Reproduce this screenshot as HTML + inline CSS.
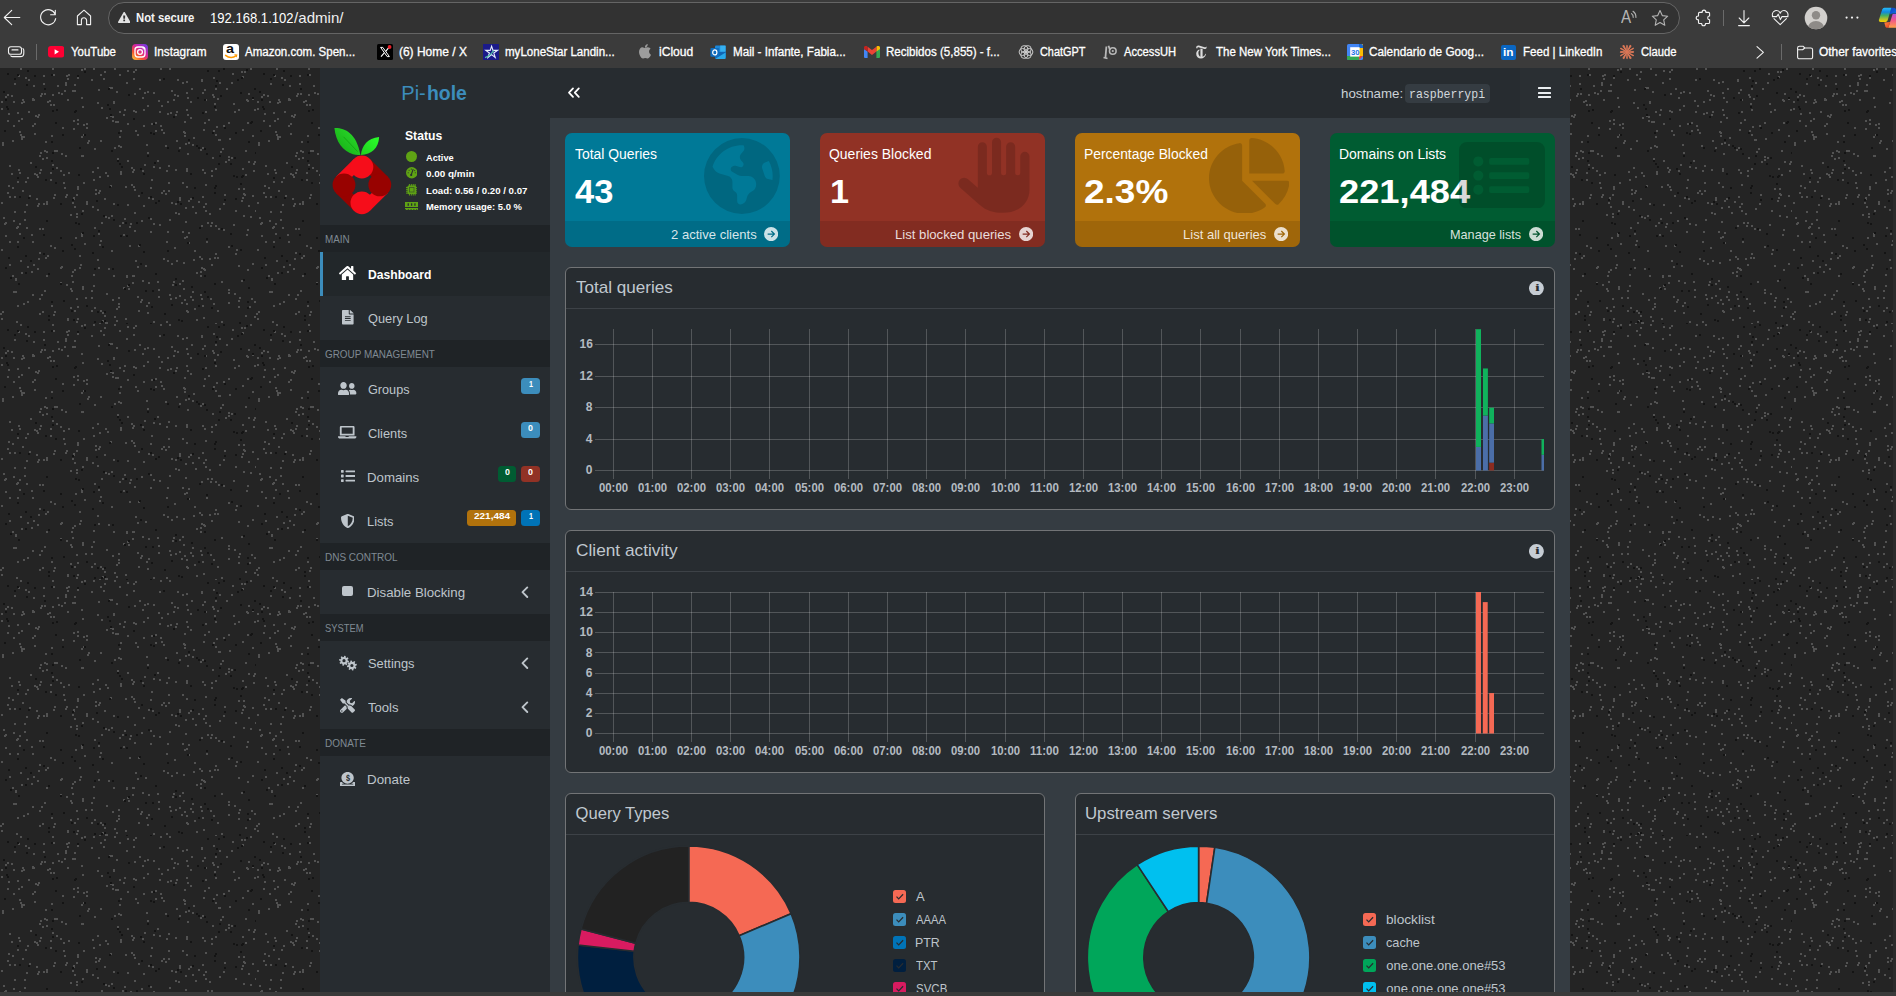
<!DOCTYPE html>
<html lang="en"><head><meta charset="utf-8"><title>Pi-hole - raspberrypi</title>
<style>
html,body{margin:0;padding:0;}
body{width:1896px;height:996px;overflow:hidden;position:relative;background:#222;font-family:"Liberation Sans", sans-serif;}
#root{position:absolute;left:0;top:0;width:1896px;height:996px;overflow:hidden;}
#root div,#root span,#root svg{position:absolute;}
#root span{white-space:pre;transform-origin:0 0;display:block;}

</style></head><body><div id="root">

<svg style="left:0;top:68px" width="1896" height="928"><defs><pattern id="spk" width="256" height="256" patternUnits="userSpaceOnUse"><rect width="256" height="256" fill="#242424"/><path d="M165 77h2v2h-2zM202 24h2v2h-2zM37 48h2v2h-2zM187 29h2v2h-2zM109 19h2v2h-2zM44 222h2v2h-2zM214 35h2v2h-2zM123 46h2v2h-2zM217 30h2v2h-2zM63 114h2v2h-2zM31 203h2v2h-2zM25 113h2v2h-2zM23 68h2v2h-2zM148 214h2v2h-2zM73 60h2v2h-2zM157 92h2v2h-2zM52 96h2v2h-2zM190 49h2v2h-2zM32 30h2v2h-2zM105 254h2v2h-2zM218 160h2v2h-2zM238 232h2v2h-2zM185 153h2v2h-2zM127 92h2v2h-2zM124 41h2v2h-2zM153 253h2v2h-2zM175 229h2v2h-2zM147 37h2v2h-2zM60 214h2v2h-2zM84 175h2v2h-2zM77 250h2v2h-2zM215 20h2v2h-2zM39 160h2v2h-2zM174 179h2v2h-2zM254 233h2v2h-2zM35 47h2v2h-2zM138 242h2v2h-2zM33 31h2v2h-2zM158 228h2v2h-2zM145 197h2v2h-2zM177 11h2v2h-2zM236 181h2v2h-2zM86 59h2v2h-2zM252 30h2v2h-2zM111 147h2v2h-2zM66 126h2v2h-2zM203 200h2v2h-2zM254 41h2v2h-2zM85 229h2v2h-2zM205 142h2v2h-2zM70 220h2v2h-2zM142 212h2v2h-2zM183 194h2v2h-2zM118 77h2v2h-2zM42 90h2v2h-2zM77 118h2v2h-2zM119 6h2v2h-2zM248 93h2v2h-2zM134 144h2v2h-2zM2 74h2v2h-2zM214 189h2v2h-2zM163 64h2v2h-2zM27 233h2v2h-2zM200 203h2v2h-2zM204 201h2v2h-2zM53 246h2v2h-2zM205 31h2v2h-2zM97 34h2v2h-2zM106 225h2v2h-2zM83 56h2v2h-2zM174 26h2v2h-2zM52 0h2v2h-2zM77 51h2v2h-2zM186 13h2v2h-2zM36 106h2v2h-2zM192 76h2v2h-2zM129 177h2v2h-2zM186 242h2v2h-2zM62 59h2v2h-2zM249 238h2v2h-2zM245 247h2v2h-2zM159 43h2v2h-2zM73 52h2v2h-2zM175 135h2v2h-2zM245 82h2v2h-2zM11 105h2v2h-2zM185 75h2v2h-2zM13 152h2v2h-2zM46 133h2v2h-2zM187 85h2v2h-2zM182 114h2v2h-2zM168 114h2v2h-2zM99 122h2v2h-2zM205 116h2v2h-2zM102 252h2v2h-2zM182 14h2v2h-2zM14 143h2v2h-2zM241 132h2v2h-2zM99 176h2v2h-2zM228 178h2v2h-2zM186 41h2v2h-2zM112 52h2v2h-2zM116 240h2v2h-2zM100 172h2v2h-2zM104 247h2v2h-2zM0 245h2v2h-2zM176 43h2v2h-2zM61 198h2v2h-2zM102 244h2v2h-2zM91 222h2v2h-2zM170 44h2v2h-2zM202 237h2v2h-2zM205 43h2v2h-2zM81 87h2v2h-2zM65 14h2v2h-2zM77 238h2v2h-2zM74 242h2v2h-2zM179 79h2v2h-2zM67 10h2v2h-2zM7 52h2v2h-2zM71 222h2v2h-2zM99 108h2v2h-2zM14 128h2v2h-2zM108 149h2v2h-2zM123 166h2v2h-2zM132 214h2v2h-2zM67 31h2v2h-2zM181 234h2v2h-2zM215 66h2v2h-2zM77 9h2v2h-2zM225 93h2v2h-2zM2 76h2v2h-2zM88 72h2v2h-2zM242 61h2v2h-2zM31 166h2v2h-2zM247 54h2v2h-2zM29 127h2v2h-2zM97 141h2v2h-2zM21 50h2v2h-2zM231 14h2v2h-2zM32 226h2v2h-2zM166 102h2v2h-2zM141 231h2v2h-2zM244 126h2v2h-2zM132 103h2v2h-2zM229 70h2v2h-2zM213 62h2v2h-2zM200 226h2v2h-2zM161 37h2v2h-2zM123 219h2v2h-2zM37 108h2v2h-2zM155 62h2v2h-2zM79 187h2v2h-2zM73 129h2v2h-2zM70 239h2v2h-2zM112 48h2v2h-2zM203 249h2v2h-2zM83 114h2v2h-2zM82 220h2v2h-2zM206 173h2v2h-2zM215 100h2v2h-2zM182 163h2v2h-2zM47 187h2v2h-2zM9 173h2v2h-2zM234 225h2v2h-2zM9 196h2v2h-2zM169 151h2v2h-2zM32 57h2v2h-2zM117 53h2v2h-2zM43 135h2v2h-2zM139 20h2v2h-2zM92 138h2v2h-2zM66 216h2v2h-2zM132 207h2v2h-2zM76 253h2v2h-2zM167 45h2v2h-2zM142 29h2v2h-2zM93 217h2v2h-2zM37 137h2v2h-2zM8 45h2v2h-2zM133 42h2v2h-2zM113 34h2v2h-2zM135 62h2v2h-2zM232 5h2v2h-2zM173 213h2v2h-2zM137 66h2v2h-2zM22 122h2v2h-2zM56 82h2v2h-2zM134 25h2v2h-2zM92 103h2v2h-2zM159 156h2v2h-2zM105 148h2v2h-2zM228 91h2v2h-2zM138 177h2v2h-2zM9 128h2v2h-2zM18 7h2v2h-2zM9 97h2v2h-2zM243 125h2v2h-2zM228 54h2v2h-2zM221 253h2v2h-2zM201 157h2v2h-2zM110 117h2v2h-2zM175 101h2v2h-2zM71 207h2v2h-2zM177 27h2v2h-2zM66 7h2v2h-2zM36 130h2v2h-2zM220 83h2v2h-2zM28 43h2v2h-2zM195 144h2v2h-2zM124 150h2v2h-2zM23 235h2v2h-2zM94 80h2v2h-2zM137 228h2v2h-2zM1 134h2v2h-2zM186 168h2v2h-2zM165 125h2v2h-2zM17 158h2v2h-2zM111 182h2v2h-2zM93 0h2v2h-2zM171 195h2v2h-2zM42 243h2v2h-2zM142 102h2v2h-2zM127 2h2v2h-2zM46 135h2v2h-2zM45 73h2v2h-2zM204 21h2v2h-2zM201 11h2v2h-2zM153 155h2v2h-2zM119 43h2v2h-2zM79 199h2v2h-2zM166 253h2v2h-2zM76 145h2v2h-2zM74 22h2v2h-2zM219 71h2v2h-2zM8 117h2v2h-2zM43 15h2v2h-2zM21 68h2v2h-2zM184 53h2v2h-2zM192 231h2v2h-2zM25 9h2v2h-2zM125 250h2v2h-2zM135 1h2v2h-2zM233 35h2v2h-2zM47 33h2v2h-2zM242 129h2v2h-2zM38 135h2v2h-2zM120 105h2v2h-2zM118 235h2v2h-2zM252 195h2v2h-2zM39 245h2v2h-2zM147 23h2v2h-2zM101 39h2v2h-2zM75 169h2v2h-2zM130 155h2v2h-2zM68 6h2v2h-2zM246 31h2v2h-2zM248 137h2v2h-2zM50 111h2v2h-2zM250 148h2v2h-2zM146 237h2v2h-2zM238 238h2v2h-2zM60 102h2v2h-2zM159 43h2v2h-2zM242 8h2v2h-2zM148 234h2v2h-2zM39 230h2v2h-2zM137 198h2v2h-2zM107 107h2v2h-2zM38 46h2v2h-2zM72 134h2v2h-2zM184 67h2v2h-2zM143 57h2v2h-2zM186 118h2v2h-2zM254 248h2v2h-2zM201 12h2v2h-2zM81 1h2v2h-2zM251 230h2v2h-2zM207 154h2v2h-2zM72 213h2v2h-2zM176 192h2v2h-2zM161 61h2v2h-2zM169 0h2v2h-2zM166 173h2v2h-2zM203 61h2v2h-2zM100 6h2v2h-2zM148 129h2v2h-2zM190 33h2v2h-2zM201 199h2v2h-2zM39 184h2v2h-2zM219 140h2v2h-2zM24 143h2v2h-2zM52 26h2v2h-2zM146 76h2v2h-2zM127 136h2v2h-2zM223 161h2v2h-2zM97 191h2v2h-2zM219 14h2v2h-2zM204 104h2v2h-2zM41 25h2v2h-2zM210 230h2v2h-2zM70 146h2v2h-2zM248 25h2v2h-2zM65 87h2v2h-2zM241 212h2v2h-2zM175 144h2v2h-2zM152 130h2v2h-2zM133 207h2v2h-2zM122 154h2v2h-2zM247 201h2v2h-2zM61 85h2v2h-2zM82 38h2v2h-2zM106 254h2v2h-2zM112 231h2v2h-2zM170 230h2v2h-2zM218 71h2v2h-2zM98 124h2v2h-2zM46 89h2v2h-2zM175 46h2v2h-2zM163 122h2v2h-2zM188 132h2v2h-2zM103 10h2v2h-2zM211 196h2v2h-2zM211 107h2v2h-2zM192 138h2v2h-2zM173 31h2v2h-2zM255 142h2v2h-2zM184 64h2v2h-2zM110 47h2v2h-2zM138 127h2v2h-2zM196 204h2v2h-2zM228 221h2v2h-2zM159 11h2v2h-2zM65 16h2v2h-2zM217 242h2v2h-2zM250 0h2v2h-2zM37 200h2v2h-2zM239 229h2v2h-2zM127 55h2v2h-2zM114 79h2v2h-2zM77 55h2v2h-2zM234 43h2v2h-2zM20 0h2v2h-2zM64 119h2v2h-2zM19 155h2v2h-2zM65 128h2v2h-2zM223 57h2v2h-2zM50 36h2v2h-2zM153 98h2v2h-2zM198 133h2v2h-2zM114 0h2v2h-2zM5 154h2v2h-2zM235 142h2v2h-2zM161 124h2v2h-2zM243 120h2v2h-2zM126 14h2v2h-2zM210 157h2v2h-2zM28 11h2v2h-2zM99 255h2v2h-2zM215 41h2v2h-2zM131 116h2v2h-2zM217 189h2v2h-2zM116 252h2v2h-2zM17 173h2v2h-2zM215 185h2v2h-2zM202 101h2v2h-2zM3 149h2v2h-2zM34 105h2v2h-2zM253 102h2v2h-2zM159 99h2v2h-2zM118 238h2v2h-2zM113 135h2v2h-2zM151 55h2v2h-2zM253 95h2v2h-2zM114 248h2v2h-2zM213 28h2v2h-2zM74 201h2v2h-2zM27 109h2v2h-2zM12 72h2v2h-2zM212 26h2v2h-2zM30 94h2v2h-2zM201 230h2v2h-2zM160 57h2v2h-2zM40 84h2v2h-2zM168 97h2v2h-2zM94 239h2v2h-2zM16 159h2v2h-2zM193 191h2v2h-2zM169 226h2v2h-2zM86 55h2v2h-2zM1 40h2v2h-2zM143 41h2v2h-2zM179 215h2v2h-2zM63 106h2v2h-2zM194 182h2v2h-2zM158 221h2v2h-2zM44 25h2v2h-2zM242 100h2v2h-2zM190 228h2v2h-2zM98 165h2v2h-2zM186 242h2v2h-2zM15 210h2v2h-2zM126 207h2v2h-2zM20 192h2v2h-2zM17 237h2v2h-2zM32 31h2v2h-2zM131 99h2v2h-2zM32 173h2v2h-2zM185 139h2v2h-2zM171 22h2v2h-2zM134 162h2v2h-2zM141 152h2v2h-2zM1 33h2v2h-2zM12 119h2v2h-2zM54 243h2v2h-2zM238 197h2v2h-2zM128 220h2v2h-2zM252 67h2v2h-2zM254 93h2v2h-2zM4 155h2v2h-2zM77 120h2v2h-2zM167 163h2v2h-2zM235 185h2v2h-2zM40 101h2v2h-2zM200 81h2v2h-2zM126 208h2v2h-2zM33 17h2v2h-2zM246 166h2v2h-2zM82 218h2v2h-2zM53 36h2v2h-2zM135 43h2v2h-2zM106 49h2v2h-2zM215 255h2v2h-2zM228 88h2v2h-2zM119 68h2v2h-2zM213 235h2v2h-2zM120 62h2v2h-2zM150 150h2v2h-2zM143 137h2v2h-2zM190 130h2v2h-2zM133 101h2v2h-2zM224 126h2v2h-2zM95 125h2v2h-2zM120 78h2v2h-2zM144 96h2v2h-2zM167 33h2v2h-2zM202 128h2v2h-2zM125 118h2v2h-2zM51 237h2v2h-2zM18 52h2v2h-2zM2 243h2v2h-2zM118 229h2v2h-2zM191 20h2v2h-2zM150 119h2v2h-2zM61 25h2v2h-2zM97 99h2v2h-2zM38 190h2v2h-2zM91 229h2v2h-2zM133 3h2v2h-2zM54 179h2v2h-2zM111 19h2v2h-2zM188 174h2v2h-2zM72 22h2v2h-2zM104 130h2v2h-2zM19 104h2v2h-2zM5 167h2v2h-2zM209 190h2v2h-2zM94 159h2v2h-2zM39 104h2v2h-2zM16 253h2v2h-2zM247 32h2v2h-2zM208 51h2v2h-2zM202 79h2v2h-2zM46 83h2v2h-2zM203 138h2v2h-2zM209 145h2v2h-2zM157 213h2v2h-2zM26 159h2v2h-2zM182 212h2v2h-2zM213 9h2v2h-2zM186 100h2v2h-2zM200 207h2v2h-2zM104 3h2v2h-2zM222 80h2v2h-2zM216 58h2v2h-2zM46 207h2v2h-2zM186 235h2v2h-2zM83 66h2v2h-2zM7 26h2v2h-2zM72 203h2v2h-2zM45 189h2v2h-2zM87 74h2v2h-2zM178 145h2v2h-2zM82 87h2v2h-2zM34 55h2v2h-2zM196 251h2v2h-2zM101 154h2v2h-2zM64 22h2v2h-2zM247 161h2v2h-2zM27 198h2v2h-2zM44 82h2v2h-2zM113 207h2v2h-2zM100 242h2v2h-2zM93 111h2v2h-2zM21 204h2v2h-2zM80 196h2v2h-2zM183 63h2v2h-2zM76 126h2v2h-2zM98 21h2v2h-2zM19 165h2v2h-2zM60 199h2v2h-2zM233 156h2v2h-2zM215 157h2v2h-2zM127 217h2v2h-2zM199 188h2v2h-2zM228 224h2v2h-2zM91 11h2v2h-2zM1 250h2v2h-2zM238 120h2v2h-2zM228 234h2v2h-2zM91 242h2v2h-2zM204 54h2v2h-2zM34 65h2v2h-2zM183 220h2v2h-2zM187 46h2v2h-2zM226 20h2v2h-2zM20 66h2v2h-2zM42 160h2v2h-2zM40 27h2v2h-2zM193 69h2v2h-2zM13 33h2v2h-2zM56 99h2v2h-2zM67 251h2v2h-2zM147 84h2v2h-2zM113 33h2v2h-2zM179 129h2v2h-2zM81 165h2v2h-2zM140 233h2v2h-2zM73 130h2v2h-2zM245 106h2v2h-2zM134 121h2v2h-2zM163 190h2v2h-2zM18 101h2v2h-2zM93 206h2v2h-2zM82 142h2v2h-2zM167 192h2v2h-2zM86 135h2v2h-2zM58 24h2v2h-2zM184 231h2v2h-2zM53 129h2v2h-2zM201 190h2v2h-2zM135 192h2v2h-2zM188 74h2v2h-2zM184 169h2v2h-2zM41 226h2v2h-2zM117 90h2v2h-2zM24 151h2v2h-2zM129 158h2v2h-2zM160 0h2v2h-2zM17 113h2v2h-2zM76 148h2v2h-2zM221 213h2v2h-2zM186 24h2v2h-2zM67 250h2v2h-2zM116 23h2v2h-2zM11 27h2v2h-2zM1 181h2v2h-2zM155 54h2v2h-2zM182 114h2v2h-2zM211 154h2v2h-2zM68 104h2v2h-2zM187 243h2v2h-2zM81 68h2v2h-2zM7 124h2v2h-2zM76 230h2v2h-2zM49 32h2v2h-2zM74 138h2v2h-2zM205 135h2v2h-2zM5 28h2v2h-2zM179 227h2v2h-2zM252 127h2v2h-2zM84 0h2v2h-2zM22 31h2v2h-2zM12 207h2v2h-2zM95 121h2v2h-2zM81 29h2v2h-2zM53 6h2v2h-2zM100 72h2v2h-2zM211 102h2v2h-2zM212 89h2v2h-2zM158 32h2v2h-2zM153 24h2v2h-2zM244 3h2v2h-2zM192 223h2v2h-2zM238 41h2v2h-2zM231 89h2v2h-2zM115 53h2v2h-2zM133 118h2v2h-2zM19 63h2v2h-2zM171 134h2v2h-2zM26 136h2v2h-2zM223 135h2v2h-2zM151 111h2v2h-2zM43 7h2v2h-2zM86 133h2v2h-2zM120 103h2v2h-2zM81 167h2v2h-2zM98 199h2v2h-2zM168 122h2v2h-2zM194 240h2v2h-2zM241 3h2v2h-2zM13 223h2v2h-2zM119 157h2v2h-2zM108 200h2v2h-2zM39 87h2v2h-2zM74 16h2v2h-2zM13 57h2v2h-2zM54 82h2v2h-2zM176 72h2v2h-2zM14 15h2v2h-2zM21 70h2v2h-2zM21 34h2v2h-2zM23 33h2v2h-2zM186 102h2v2h-2zM33 196h2v2h-2zM54 126h2v2h-2zM105 104h2v2h-2zM57 17h2v2h-2zM17 44h2v2h-2zM147 244h2v2h-2zM51 67h2v2h-2zM50 104h2v2h-2zM150 163h2v2h-2zM172 216h2v2h-2zM133 10h2v2h-2zM179 131h2v2h-2zM144 24h2v2h-2zM188 164h2v2h-2zM243 147h2v2h-2zM15 211h2v2h-2zM15 223h2v2h-2zM50 177h2v2h-2z" fill="#525252"/><path d="M240 24h2v2h-2zM110 46h2v2h-2zM147 87h2v2h-2zM223 0h2v2h-2zM103 147h2v2h-2zM27 2h2v2h-2zM178 251h2v2h-2zM48 251h2v2h-2zM94 253h2v2h-2zM177 133h2v2h-2zM81 145h2v2h-2zM109 118h2v2h-2zM255 84h2v2h-2zM56 41h2v2h-2zM251 53h2v2h-2zM167 182h2v2h-2zM48 205h2v2h-2zM202 44h2v2h-2zM216 12h2v2h-2zM190 105h2v2h-2zM155 134h2v2h-2zM219 87h2v2h-2zM194 119h2v2h-2zM235 64h2v2h-2zM17 178h2v2h-2zM167 79h2v2h-2zM230 165h2v2h-2zM86 237h2v2h-2zM224 131h2v2h-2zM118 64h2v2h-2zM171 236h2v2h-2zM121 98h2v2h-2zM136 154h2v2h-2zM79 79h2v2h-2zM126 167h2v2h-2zM178 82h2v2h-2zM120 167h2v2h-2zM96 132h2v2h-2zM52 84h2v2h-2zM52 100h2v2h-2zM196 77h2v2h-2zM75 154h2v2h-2zM152 222h2v2h-2zM140 100h2v2h-2zM55 54h2v2h-2zM143 105h2v2h-2zM198 237h2v2h-2zM17 6h2v2h-2zM204 223h2v2h-2zM113 151h2v2h-2zM237 11h2v2h-2zM72 131h2v2h-2zM207 2h2v2h-2zM124 220h2v2h-2zM215 117h2v2h-2zM117 92h2v2h-2zM63 232h2v2h-2zM221 160h2v2h-2zM133 50h2v2h-2zM214 124h2v2h-2zM204 80h2v2h-2zM128 216h2v2h-2zM247 233h2v2h-2zM10 209h2v2h-2zM93 167h2v2h-2zM5 199h2v2h-2zM250 54h2v2h-2zM19 128h2v2h-2zM111 82h2v2h-2zM102 178h2v2h-2zM51 233h2v2h-2zM104 243h2v2h-2zM8 189h2v2h-2zM175 210h2v2h-2zM233 107h2v2h-2zM94 200h2v2h-2zM62 182h2v2h-2zM28 129h2v2h-2zM140 195h2v2h-2zM204 31h2v2h-2zM6 38h2v2h-2zM214 215h2v2h-2zM180 135h2v2h-2zM55 114h2v2h-2zM155 205h2v2h-2zM112 200h2v2h-2zM236 108h2v2h-2zM84 66h2v2h-2zM35 98h2v2h-2zM240 115h2v2h-2zM74 180h2v2h-2zM211 239h2v2h-2zM150 64h2v2h-2zM240 181h2v2h-2zM117 136h2v2h-2zM192 129h2v2h-2zM218 95h2v2h-2zM246 1h2v2h-2zM143 183h2v2h-2zM125 154h2v2h-2zM164 245h2v2h-2zM248 219h2v2h-2zM43 185h2v2h-2zM78 155h2v2h-2zM197 29h2v2h-2zM43 166h2v2h-2zM71 176h2v2h-2zM7 5h2v2h-2zM107 36h2v2h-2zM150 128h2v2h-2zM51 73h2v2h-2zM119 95h2v2h-2zM231 177h2v2h-2zM78 106h2v2h-2zM206 85h2v2h-2zM46 152h2v2h-2zM101 253h2v2h-2zM109 40h2v2h-2zM224 59h2v2h-2zM60 135h2v2h-2zM214 119h2v2h-2zM71 242h2v2h-2zM252 29h2v2h-2zM247 239h2v2h-2zM73 251h2v2h-2zM126 255h2v2h-2zM84 3h2v2h-2zM82 164h2v2h-2zM239 254h2v2h-2zM151 238h2v2h-2zM191 218h2v2h-2zM214 38h2v2h-2zM92 184h2v2h-2zM14 10h2v2h-2zM23 169h2v2h-2zM48 247h2v2h-2zM248 73h2v2h-2zM17 109h2v2h-2zM212 64h2v2h-2zM173 48h2v2h-2zM187 174h2v2h-2zM242 107h2v2h-2zM145 222h2v2h-2zM175 216h2v2h-2zM128 26h2v2h-2zM148 149h2v2h-2zM181 252h2v2h-2zM206 170h2v2h-2zM139 176h2v2h-2zM104 252h2v2h-2zM60 169h2v2h-2zM98 162h2v2h-2zM153 65h2v2h-2zM44 20h2v2h-2zM204 207h2v2h-2zM25 204h2v2h-2zM153 55h2v2h-2zM3 23h2v2h-2zM97 243h2v2h-2zM30 192h2v2h-2zM75 42h2v2h-2zM108 20h2v2h-2zM234 89h2v2h-2zM51 92h2v2h-2zM18 215h2v2h-2zM51 6h2v2h-2zM188 71h2v2h-2zM158 132h2v2h-2zM154 94h2v2h-2zM215 17h2v2h-2zM163 10h2v2h-2zM220 27h2v2h-2zM254 20h2v2h-2zM60 215h2v2h-2zM207 228h2v2h-2zM34 7h2v2h-2zM198 79h2v2h-2zM243 211h2v2h-2zM52 42h2v2h-2zM241 108h2v2h-2zM77 7h2v2h-2zM218 2h2v2h-2zM4 62h2v2h-2zM45 111h2v2h-2zM62 66h2v2h-2zM241 9h2v2h-2zM141 124h2v2h-2zM230 95h2v2h-2zM25 187h2v2h-2zM74 43h2v2h-2zM150 255h2v2h-2zM235 130h2v2h-2zM26 16h2v2h-2zM5 31h2v2h-2zM7 40h2v2h-2zM199 159h2v2h-2z" fill="#141414"/></pattern></defs><rect width="1896" height="928" fill="url(#spk)"/></svg>
<div style="left:0px;top:0px;width:1896px;height:68px;background:#3b3b3b;"></div>
<div style="left:108px;top:2px;width:1570px;height:30px;background:#323232;border:1px solid #656565;border-radius:16px;"></div>
<div style="left:0px;top:992px;width:1896px;height:4px;background:#3a3a3a;"></div>
<div style="left:1893px;top:68px;width:3px;height:928px;background:#2b2b2b;"></div>
<div style="left:320px;top:68px;width:230px;height:928px;background:#272c30;"></div>
<div style="left:550px;top:68px;width:1020px;height:50px;background:#272c30;"></div>
<div style="left:550px;top:118px;width:1020px;height:878px;background:#353c42;"></div>
<div style="left:1520px;top:68px;width:50px;height:50px;background:#2a2f33;"></div>
<svg style="left:0px;top:0px" width="30" height="36" viewBox="0 0 30 36" ><path fill="none" stroke="#f2f2f2" stroke-width="1.1" stroke-linecap="round" stroke-linejoin="round" d="M19.8 17.5H4.3M11.7 10.4L4.3 17.5L11.7 24.7"/></svg>
<svg style="left:36px;top:0px" width="30" height="36" viewBox="0 0 30 36" ><path fill="none" stroke="#f2f2f2" stroke-width="1.1" stroke-linecap="round" stroke-linejoin="round" d="M19.3 14.5A7.6 7.6 0 1 0 19.7 18.5M19.3 10.3V14.8H14.6"/></svg>
<svg style="left:72px;top:0px" width="30" height="36" viewBox="0 0 30 36" ><path fill="none" stroke="#f2f2f2" stroke-width="1.1" stroke-linecap="round" stroke-linejoin="round" d="M5.4 16V24.6H9.4V20.4A2.6 2.6 0 0 1 14.6 20.4V24.6H18.6V16L12 10.2Z"/></svg>
<svg style="left:117.8px;top:12px;" width="12.4" height="11" viewBox="-1.0 -1536.0 1794.0 1664.0" preserveAspectRatio="none" fill="#e2e2e2"><path transform="scale(1,-1)" d="M1024 161v190q0 14 -9.5 23.5t-22.5 9.5h-192q-13 0 -22.5 -9.5t-9.5 -23.5v-190q0 -14 9.5 -23.5t22.5 -9.5h192q13 0 22.5 9.5t9.5 23.5zM1022 535l18 459q0 12 -10 19q-13 11 -24 11h-220q-11 0 -24 -11q-10 -7 -10 -21l17 -457q0 -10 10 -16.5t24 -6.5h185
q14 0 23.5 6.5t10.5 16.5zM1008 1469l768 -1408q35 -63 -2 -126q-17 -29 -46.5 -46t-63.5 -17h-1536q-34 0 -63.5 17t-46.5 46q-37 63 -2 126l768 1408q17 31 47 49t65 18t65 -18t47 -49z"/></svg>
<span style="left:136.30px;top:12.10px;font:700 12px/1 'Liberation Sans',sans-serif;color:#f4f4f4;transform:scaleX(0.9415);">Not secure</span>
<span style="left:209.59px;top:10.55px;font:400 14.3px/1 'Liberation Sans',sans-serif;color:#ffffff;transform:scaleX(0.9140);">192.168.1.102<span style="left:92.35px;top:0;color:#f0f0f0;transform:scaleX(1.1521);">/admin/</span></span>
<svg style="left:1616px;top:4px" width="26" height="26" viewBox="0 0 26 26" ><path fill="none" stroke="#b4b4b4" stroke-width="1.1" stroke-linecap="round" stroke-linejoin="round" d="M15.5 9.6A4 4 0 0 1 17.2 13.4M17 7.3A7 7 0 0 1 19.9 13.4"/></svg>
<span style="left:1620.80px;top:9.45px;font:400 17.5px/1 'Liberation Sans',sans-serif;color:#b4b4b4;transform:scaleX(0.8667);">A</span>
<svg style="left:1648px;top:4px" width="26" height="26" viewBox="0 0 26 26" ><path fill="none" stroke="#b4b4b4" stroke-width="1.1" stroke-linecap="round" stroke-linejoin="round" d="M12 6.6L14.3 11.6L19.7 12.2L15.7 15.9L16.8 21.3L12 18.6L7.2 21.3L8.3 15.9L4.3 12.2L9.7 11.6Z"/></svg>
<svg style="left:1692px;top:4px" width="26" height="26" viewBox="0 0 26 26" ><path fill="none" stroke="#f2f2f2" stroke-width="1.1" stroke-linecap="round" stroke-linejoin="round" d="M6.500 9.400Q6.500 8.400 7.500 8.400H10.100A1.900 2.300 0 0 1 13.900 8.400H16.600Q17.600 8.400 17.600 9.400V12A1.900 1.900 0 0 0 17.600 15.800V18.500Q17.600 19.500 16.600 19.500H13.500A1.900 2.300 0 0 1 9.700 19.500H7.500Q6.500 19.500 6.500 18.500V15.800A2.300 1.900 0 0 1 6.500 12Z"/></svg>
<div style="left:1723px;top:10px;width:1px;height:16px;background:#6a6a6a;"></div>
<svg style="left:1731px;top:4px" width="26" height="26" viewBox="0 0 26 26" ><path fill="none" stroke="#f2f2f2" stroke-width="1.1" stroke-linecap="round" stroke-linejoin="round" d="M13 6.5V18.6M8.2 14L13 18.8L17.8 14M7.6 21.6H18.4"/></svg>
<svg style="left:1767px;top:4px" width="26" height="26" viewBox="0 0 26 26" ><path fill="none" stroke="#f2f2f2" stroke-width="1.1" stroke-linecap="round" stroke-linejoin="round" d="M13.2 20.6L7 14.6M19.4 14.6L13.2 20.6M5.6 12A4 4 0 0 1 13.2 9.3A4 4 0 0 1 20.8 12M5.4 12.6H9.6L11.2 10.2L13.4 15.6L15 12.6H21"/></svg>
<svg style="left:1804px;top:6px" width="24" height="24" viewBox="0 0 24 24" ><defs><clipPath id="av"><circle cx="12" cy="12" r="11.3"/></clipPath></defs><circle cx="12" cy="12" r="11.3" fill="#d2d0cd"/><g clip-path="url(#av)" fill="#8e8b88"><circle cx="12" cy="9.3" r="4.2"/><ellipse cx="12" cy="21.6" rx="8" ry="6.6"/></g></svg>
<svg style="left:1844px;top:14px" width="16" height="8" viewBox="0 0 16 8" ><circle cx="2.6" cy="3.6" r="1.1" fill="#f2f2f2"/><circle cx="8" cy="3.6" r="1.1" fill="#f2f2f2"/><circle cx="13.4" cy="3.6" r="1.1" fill="#f2f2f2"/></svg>
<svg style="left:1878px;top:6px" width="18" height="24" viewBox="0 0 18 24" ><defs><linearGradient id="cp1" x1="0" y1="0" x2="0" y2="1"><stop offset="0" stop-color="#25bcfa"/><stop offset=".3" stop-color="#1089e0"/><stop offset=".55" stop-color="#45b062"/><stop offset=".8" stop-color="#b5c02c"/><stop offset="1" stop-color="#f5d000"/></linearGradient><linearGradient id="cp2" x1="0" y1="0" x2="0" y2="1"><stop offset="0" stop-color="#b455dc"/><stop offset=".45" stop-color="#f0568c"/><stop offset="1" stop-color="#ffa04a"/></linearGradient><linearGradient id="cp3" x1="0" y1="0" x2="1" y2="1"><stop offset="0" stop-color="#0a3cc8"/><stop offset="1" stop-color="#1272e0"/></linearGradient><linearGradient id="cp4" x1="0" y1="0" x2="1" y2="1"><stop offset="0" stop-color="#ff8a3c"/><stop offset="1" stop-color="#e63c22"/></linearGradient></defs><path d="M13.400 1.800H16Q17.600 1.800 18 3.400V7.600H14.800Q13.400 7.600 12.400 8.600L11.600 7.200Z" fill="url(#cp3)"/><path d="M14.700 7.900H18V21.700H10.200Z" fill="url(#cp2)"/><path d="M6.300 16.400L12.200 16L10.400 21.700H9Q7.800 21.700 7.400 20.400Z" fill="url(#cp4)"/><path d="M6.400 1.800H13.400L9.600 14.600Q9 15.900 7.600 15.900H2.600Q.4 15.900 1 13.600L4.200 3.600Q4.800 1.800 6.400 1.800Z" fill="url(#cp1)"/></svg>
<svg style="left:6px;top:42px" width="22" height="20" viewBox="0 0 22 20" ><rect x="2.5" y="4.7" width="13" height="7.6" rx="2.4" fill="none" stroke="#f2f2f2" stroke-width="1.1" stroke-linecap="round" stroke-linejoin="round"/><path fill="none" stroke="#f2f2f2" stroke-width="1.1" stroke-linecap="round" stroke-linejoin="round" d="M6 7.9H12M17 6.6A2.4 2.4 0 0 1 17.8 8.4V11.2A3.4 3.4 0 0 1 14.4 14.6H6.6A2.4 2.4 0 0 1 4.8 13.8"/></svg>
<div style="left:36px;top:44px;width:1px;height:16px;background:#6a6a6a;"></div>
<svg style="left:48px;top:46px" width="16.4" height="11.6" viewBox="0 0 16.4 11.6" ><rect width="16.4" height="11.6" rx="3" fill="#ff0033"/><path d="M6.6 3.2L11 5.8L6.6 8.4Z" fill="#fff"/></svg>
<span style="left:70.50px;top:45.90px;font:400 12px/1 'Liberation Sans',sans-serif;color:#ffffff;transform:scaleX(0.9540);-webkit-text-stroke:.3px #fff;">YouTube</span>
<svg style="left:132px;top:44px" width="16" height="16" viewBox="0 0 16 16" ><defs><linearGradient id="ig" x1="0.1" y1="1" x2="0.9" y2="0"><stop offset="0" stop-color="#fec53a"/><stop offset=".3" stop-color="#f4522e"/><stop offset=".6" stop-color="#d6249f"/><stop offset="1" stop-color="#6a3de8"/></linearGradient></defs><rect width="16" height="16" rx="4" fill="url(#ig)"/><rect x="3" y="3" width="10" height="10" rx="3" fill="none" stroke="#fff" stroke-width="1.3"/><circle cx="8" cy="8" r="2.4" fill="none" stroke="#fff" stroke-width="1.3"/><circle cx="11.2" cy="4.8" r=".7" fill="#fff"/></svg>
<span style="left:153.52px;top:45.90px;font:400 12px/1 'Liberation Sans',sans-serif;color:#ffffff;transform:scaleX(0.9836);-webkit-text-stroke:.3px #fff;">Instagram</span>
<svg style="left:223px;top:44px" width="16" height="16" viewBox="0 0 16 16" ><rect width="16" height="16" rx="3" fill="#fff"/><path d="M2.600 11.400C6 14.200 10.400 14 13 11.800" fill="none" stroke="#f90" stroke-width="1.500" stroke-linecap="round"/><path d="M11.400 10.800L13.800 10.900L13.200 13.200" fill="none" stroke="#f90" stroke-width="1.100"/></svg>
<span style="left:226.40px;top:43.15px;font:700 12.5px/1 'Liberation Sans',sans-serif;color:#111;transform:scaleX(1.1500);">a</span>
<span style="left:245.20px;top:45.90px;font:400 12px/1 'Liberation Sans',sans-serif;color:#ffffff;transform:scaleX(0.9599);-webkit-text-stroke:.3px #fff;">Amazon.com. Spen...</span>
<svg style="left:377px;top:44px" width="16" height="16" viewBox="0 0 16 16" ><rect width="16" height="16" rx="1.5" fill="#000"/><path d="M3.6 3.4H5.8L12.4 12.6H10.2Z" fill="none" stroke="#fff" stroke-width="1"/><path d="M12 3.4L8.7 7.3M7.3 8.9L4 12.6" stroke="#fff" stroke-width="1.1"/><circle cx="12.6" cy="3" r="1.9" fill="#e8202a"/></svg>
<span style="left:398.90px;top:45.90px;font:400 12px/1 'Liberation Sans',sans-serif;color:#ffffff;-webkit-text-stroke:.3px #fff;">(6) Home / X</span>
<svg style="left:483px;top:44px" width="16" height="16" viewBox="0 0 16 16" ><rect width="16" height="16" fill="#1b1a8a"/><path d="M8.6 2.2L10 6.4H14.4L10.8 9L12.2 13.4L8.6 10.6L5 13.4L6.4 9L2.8 6.4H7.2Z" fill="none" stroke="#e8f0ff" stroke-width="1.1"/><path d="M2 13.6C5 12.6 8 10.6 10.6 6.6" stroke="#4fc0a8" stroke-width="1.2" fill="none"/></svg>
<span style="left:505.20px;top:45.90px;font:400 12px/1 'Liberation Sans',sans-serif;color:#ffffff;transform:scaleX(0.9619);-webkit-text-stroke:.3px #fff;">myLoneStar Landin...</span>
<svg style="left:639px;top:44.4px;" width="12" height="14.6" viewBox="0.0 -1536.0 1393.0 1664.0" preserveAspectRatio="none" fill="#9c9c9c"><path transform="scale(1,-1)" d="M1393 321q-39 -125 -123 -250q-129 -196 -257 -196q-49 0 -140 32q-86 32 -151 32q-61 0 -142 -33q-81 -34 -132 -34q-152 0 -301 259q-147 261 -147 503q0 228 113 374q113 144 284 144q72 0 177 -30q104 -30 138 -30q45 0 143 34q102 34 173 34q119 0 213 -65
q52 -36 104 -100q-79 -67 -114 -118q-65 -94 -65 -207q0 -124 69 -223t158 -126zM1017 1494q0 -61 -29 -136q-30 -75 -93 -138q-54 -54 -108 -72q-37 -11 -104 -17q3 149 78 257q74 107 250 148q1 -3 2.5 -11t2.5 -11q0 -4 0.5 -10t0.5 -10z"/></svg>
<span style="left:659.20px;top:45.90px;font:400 12px/1 'Liberation Sans',sans-serif;color:#ffffff;transform:scaleX(1.0076);-webkit-text-stroke:.3px #fff;">iCloud</span>
<svg style="left:710px;top:44px" width="16" height="16" viewBox="0 0 16 16" ><rect x="5" y="1.6" width="10.6" height="12" rx="1" fill="#1a86d8"/><rect x="10.2" y="1.6" width="5.4" height="6" fill="#35b0f0"/><path d="M5 8L15.6 8V14A1 1 0 0 1 14.6 15H6A1 1 0 0 1 5 14Z" fill="#1066b5"/><path d="M5.4 14.8L15.6 8.6V14A1 1 0 0 1 14.6 15H6Z" fill="#28a8ea"/><rect x=".4" y="4" width="8.8" height="8.8" rx="1" fill="#0f6cbd"/><ellipse cx="4.8" cy="8.4" rx="2.1" ry="2.5" fill="none" stroke="#fff" stroke-width="1.2"/></svg>
<span style="left:732.70px;top:45.90px;font:400 12px/1 'Liberation Sans',sans-serif;color:#ffffff;transform:scaleX(0.9705);-webkit-text-stroke:.3px #fff;">Mail - Infante, Fabia...</span>
<svg style="left:864px;top:46px" width="16" height="12" viewBox="0 0 16 12" ><path d="M0 1.6V10.9A1.1 1.1 0 0 0 1.1 12H3.6V5.6L0 2.9Z" fill="#4285f4"/><path d="M12.4 12H14.9A1.1 1.1 0 0 0 16 10.9V1.6L12.4 4.4Z" fill="#34a853"/><path d="M12.4 .8V5.6L16 2.9V1.7C16 .1 14.2 -.6 13 .3Z" fill="#fbbc04"/><path d="M3.6 5.6V.8L8 4.1L12.4 .8V5.6L8 8.9Z" fill="#ea4335"/><path d="M0 1.7V2.9L3.6 5.6V.8L3 .3C1.800-.6 0 .1 0 1.700Z" fill="#c5221f"/></svg>
<span style="left:886.20px;top:45.90px;font:400 12px/1 'Liberation Sans',sans-serif;color:#ffffff;transform:scaleX(0.9633);-webkit-text-stroke:.3px #fff;">Recibidos (5,855) - f...</span>
<svg style="left:1018px;top:44px" width="16" height="16" viewBox="0 0 16 16" ><g fill="none" stroke="#cfcfcf" stroke-width=".95"><circle cx="11.30" cy="8.00" r="3.600"/><circle cx="9.65" cy="10.86" r="3.600"/><circle cx="6.35" cy="10.86" r="3.600"/><circle cx="4.70" cy="8.00" r="3.600"/><circle cx="6.35" cy="5.14" r="3.600"/><circle cx="9.65" cy="5.14" r="3.600"/></g></svg>
<span style="left:1039.80px;top:45.90px;font:400 12px/1 'Liberation Sans',sans-serif;color:#ffffff;transform:scaleX(0.9056);-webkit-text-stroke:.3px #fff;">ChatGPT</span>
<svg style="left:1102px;top:44px" width="16" height="16" viewBox="0 0 16 16" ><g fill="none" stroke="#b8b8b8" stroke-width="1.6"><circle cx="10.8" cy="7" r="3.3"/><path d="M4.400 2.500L3.400 14M6.500 1.800L8 6" stroke-width="1.8"/><path d="M1.500 13.500L5.500 14.500" /></g><circle cx="10.8" cy="7" r="1.1" fill="#b8b8b8"/></svg>
<span style="left:1124.20px;top:45.90px;font:400 12px/1 'Liberation Sans',sans-serif;color:#ffffff;transform:scaleX(0.9305);-webkit-text-stroke:.3px #fff;">AccessUH</span>
<svg style="left:1194px;top:44px" width="14" height="16" viewBox="0 0 14 16" ><g fill="#dcdcdc"><path d="M2.200 3.600C2.200 1.900 3.600 1.200 5 1.600L10.600 3.200C11.600 3.500 12.200 3 12.200 2.200C13.200 3.800 12.200 5.400 10.600 5L5.200 3.400C4 3.100 3.200 3.600 3.400 4.600C2.600 4.600 2.200 4.200 2.200 3.600Z"/><path d="M6.400 4.400L8.600 5V12.800C10 12.400 11 11.200 11.400 9.800L12 10C11.400 12.800 9.400 14.600 7 14.600C4.200 14.600 2.200 12.600 2.200 9.800C2.200 7.600 3.600 6 5.400 5.600L5.600 6.200C4.800 6.600 4.400 7.600 4.400 9C4.400 10.800 5.200 12.200 6.400 12.700Z"/></g></svg>
<span style="left:1215.60px;top:45.90px;font:400 12px/1 'Liberation Sans',sans-serif;color:#ffffff;transform:scaleX(0.9572);-webkit-text-stroke:.3px #fff;">The New York Times...</span>
<svg style="left:1347px;top:44px" width="16" height="16" viewBox="0 0 16 16" ><rect x="0" y="0" width="16" height="16" rx="1.6" fill="#4285f4"/><path d="M0 12H4V16H1.600A1.600 1.600 0 0 1 0 14.400Z" fill="#34a853"/><path d="M12 12H16V0H12Z" fill="#fbbc04"/><path d="M4 12H12V16H4Z" fill="#34a853"/><path d="M12 12H16L12 16Z" fill="#ea4335"/><path d="M12 0H14.400A1.600 1.600 0 0 1 16 1.600V4H12Z" fill="#1967d2"/><rect x="3.200" y="3.200" width="9.400" height="9.400" fill="#fff"/></svg>
<span style="left:1350.80px;top:48.95px;font:700 7.5px/1 'Liberation Sans',sans-serif;color:#1a73e8;transform:scaleX(1.0280);">30</span>
<span style="left:1369.20px;top:45.90px;font:400 12px/1 'Liberation Sans',sans-serif;color:#ffffff;transform:scaleX(0.9788);-webkit-text-stroke:.3px #fff;">Calendario de Goog...</span>
<svg style="left:1501px;top:44.5px" width="15" height="15" viewBox="0 0 15 15" ><rect width="15" height="15" rx="2" fill="#0a66c2"/></svg>
<span style="left:1503.30px;top:47.15px;font:700 11.5px/1 'Liberation Sans',sans-serif;color:#ffffff;transform:scaleX(1.0299);">in</span>
<span style="left:1523.20px;top:45.90px;font:400 12px/1 'Liberation Sans',sans-serif;color:#ffffff;transform:scaleX(0.9629);-webkit-text-stroke:.3px #fff;">Feed | LinkedIn</span>
<svg style="left:1619px;top:44px" width="16" height="16" viewBox="0 0 16 16" ><g fill="#d97757" stroke="#d97757" stroke-width=".9" stroke-linejoin="round"><path transform="rotate(0 8 8)" d="M8 8L7.7 1.4L8.3 1.6Z"/><path transform="rotate(30 8 8)" d="M8 8L7.4 0.6L8.6 0.8Z"/><path transform="rotate(60 8 8)" d="M8 8L7.7 0.6L8.3 0.8Z"/><path transform="rotate(90 8 8)" d="M8 8L7.4 1.4L8.6 1.6Z"/><path transform="rotate(120 8 8)" d="M8 8L7.7 0.6L8.3 0.8Z"/><path transform="rotate(150 8 8)" d="M8 8L7.4 0.6L8.6 0.8Z"/><path transform="rotate(180 8 8)" d="M8 8L7.7 1.4L8.3 1.6Z"/><path transform="rotate(210 8 8)" d="M8 8L7.4 0.6L8.6 0.8Z"/><path transform="rotate(240 8 8)" d="M8 8L7.7 0.6L8.3 0.8Z"/><path transform="rotate(270 8 8)" d="M8 8L7.4 1.4L8.6 1.6Z"/><path transform="rotate(300 8 8)" d="M8 8L7.7 0.6L8.3 0.8Z"/><path transform="rotate(330 8 8)" d="M8 8L7.4 0.6L8.6 0.8Z"/></g></svg>
<span style="left:1641.20px;top:45.90px;font:400 12px/1 'Liberation Sans',sans-serif;color:#ffffff;transform:scaleX(0.9334);-webkit-text-stroke:.3px #fff;">Claude</span>
<svg style="left:1752px;top:42px" width="16" height="20" viewBox="0 0 16 20" ><path fill="none" stroke="#f2f2f2" stroke-width="1.1" stroke-linecap="round" stroke-linejoin="round" d="M5 4.600L11.400 10.400L5 16.200"/></svg>
<div style="left:1781px;top:44px;width:1px;height:16px;background:#6a6a6a;"></div>
<svg style="left:1795px;top:42px" width="20" height="20" viewBox="0 0 20 20" ><path fill="none" stroke="#f2f2f2" stroke-width="1.1" stroke-linecap="round" stroke-linejoin="round" d="M2.600 6A1.800 1.800 0 0 1 4.400 4.200H8L9.800 6H15.800A1.800 1.800 0 0 1 17.600 7.800V15A1.800 1.800 0 0 1 15.800 16.800H4.400A1.800 1.800 0 0 1 2.600 15ZM2.600 7.800H7.600L9.800 6"/></svg>
<span style="left:1819.30px;top:45.90px;font:400 12px/1 'Liberation Sans',sans-serif;color:#ffffff;transform:scaleX(0.9937);-webkit-text-stroke:.3px #fff;">Other favorites</span>
<span style="left:401.30px;top:83.00px;font:400 20px/1 'Liberation Sans',sans-serif;color:#3c8dbc;">Pi-<span style="left:25.33px;top:0;font-weight:700;transform:scaleX(0.9702);">hole</span></span>
<svg style="left:566px;top:85px" width="16" height="16" viewBox="0 0 16 16"><path d="M7 3.400L3 7.600L7 11.800M12.800 3.400L8.800 7.600L12.800 11.800" fill="none" stroke="#fff" stroke-width="1.800" stroke-linecap="round" stroke-linejoin="round"/></svg>
<span style="left:1340.80px;top:86.70px;font:400 13.2px/1 'Liberation Sans',sans-serif;color:#ccd2d7;transform:scaleX(1.0080);">hostname:</span>
<div style="left:1405px;top:84px;width:85px;height:19px;background:#353c42;border-radius:4px;"></div>
<span style="left:1409.05px;top:88.50px;font:400 12.2px/1 'Liberation Mono',monospace;color:#d4d9dd;transform:scaleX(0.9452);">raspberrypi</span>
<div style="left:1538.4px;top:87px;width:12.6px;height:2px;background:#e9edf0;border-radius:.5px;"></div>
<div style="left:1538.4px;top:91.6px;width:12.6px;height:2px;background:#e9edf0;border-radius:.5px;"></div>
<div style="left:1538.4px;top:96.2px;width:12.6px;height:2px;background:#e9edf0;border-radius:.5px;"></div>
<svg style="left:326px;top:122px" width="72" height="98" viewBox="0 0 72 98">
<defs><linearGradient id="lf" x1="0" y1="1" x2="1" y2="0"><stop offset="0" stop-color="#13a813"/><stop offset="1" stop-color="#2de02d"/></linearGradient>
<linearGradient id="lf2" x1="0" y1="1" x2="1" y2="0"><stop offset="0" stop-color="#1fd01f"/><stop offset="1" stop-color="#2bff2b"/></linearGradient></defs>
<path d="M8.400 6.100C18 5.600 30.500 10.500 34.400 32.900C31.500 33.200 29 32.800 27 32.200C17 29.500 9.800 20 8.400 6.100Z" fill="url(#lf)"/>
<path d="M17.500 14.800L31.600 29.600" stroke="#0b8f0b" stroke-width="1" fill="none" opacity=".55"/>
<path d="M53.100 14.900C52.600 26 45.500 32.200 34.900 32.900C35.600 24.500 41.500 15.600 53.100 14.900Z" fill="url(#lf2)"/>
<path fill="#f60d1a" d="M35.90 45.00 L27.84 36.94 L9.94 54.84 L18.00 62.90 Z"/><path fill="#980200" d="M18.00 62.90 L9.94 70.96 L27.84 88.86 L35.90 80.80 Z"/><path fill="#f60d1a" d="M35.90 80.80 L43.96 88.86 L61.86 70.96 L53.80 62.90 Z"/><path fill="#980200" d="M53.80 62.90 L61.86 54.84 L43.96 36.94 L35.90 45.00 Z"/><circle cx="35.90" cy="45.00" r="11.40" fill="#f60d1a"/><circle cx="18.00" cy="62.90" r="11.40" fill="#980200"/><circle cx="35.90" cy="80.80" r="11.40" fill="#f60d1a"/><circle cx="53.80" cy="62.90" r="11.40" fill="#980200"/></svg>
<span style="left:404.60px;top:129.60px;font:700 12.6px/1 'Liberation Sans',sans-serif;color:#ffffff;transform:scaleX(0.9666);">Status</span>
<div style="left:405.6px;top:150.9px;width:11.5px;height:11.5px;background:#5fa314;border-radius:50%;"></div>
<span style="left:425.50px;top:153.95px;font:700 9.3px/1 'Liberation Sans',sans-serif;color:#ffffff;transform:scaleX(0.9916);">Active</span>
<svg style="left:405.600px;top:167.100px" width="11.500" height="11.500" viewBox="0 0 11.500 11.500"><circle cx="5.750" cy="5.750" r="5.750" fill="#5fa314"/><path d="M5.200 8L7 2.600" stroke="#272c30" stroke-width="1.100" stroke-linecap="round"/><circle cx="5.200" cy="8" r="1.100" fill="#272c30"/><g fill="#272c30"><circle cx="2.200" cy="5.800" r=".55"/><circle cx="3.100" cy="3.300" r=".55"/><circle cx="5.300" cy="2.100" r=".55"/><circle cx="8.700" cy="3.600" r=".55"/><circle cx="9.300" cy="5.800" r=".55"/></g></svg>
<span style="left:425.50px;top:169.95px;font:700 9.3px/1 'Liberation Sans',sans-serif;color:#ffffff;transform:scaleX(1.0658);">0.00 q/min</span>
<svg style="left:405.600px;top:184px" width="11.500" height="11.500" viewBox="0 0 11.500 11.500"><g fill="#5fa314"><rect x="2.90" y="0" width="1" height="11.500"/><rect x="0" y="2.90" width="11.500" height="1"/><rect x="4.80" y="0" width="1" height="11.500"/><rect x="0" y="4.80" width="11.500" height="1"/><rect x="6.70" y="0" width="1" height="11.500"/><rect x="0" y="6.70" width="11.500" height="1"/><rect x="8.60" y="0" width="1" height="11.500"/><rect x="0" y="8.60" width="11.500" height="1"/><rect x="1.600" y="1.600" width="8.300" height="8.300" rx="1"/></g><rect x="3.500" y="3.500" width="4.500" height="4.500" fill="none" stroke="#272c30" stroke-width=".8" opacity=".6"/></svg>
<span style="left:425.50px;top:186.85px;font:700 9.3px/1 'Liberation Sans',sans-serif;color:#ffffff;transform:scaleX(1.0380);">Load: 0.56 / 0.20 / 0.07</span>
<svg style="left:404.800px;top:201.900px" width="13.200" height="8.200" viewBox="0 0 13.200 8.200"><path fill="#5fa314" d="M0 0H13.200V5.100H0ZM0 5.900H13.200V8.200H12.200V7.200H11.200V8.200H9.400V7.200H8.400V8.200H6.600V7.200H5.600V8.200H3.800V7.200H2.800V8.200H1V7.200H0Z"/><g fill="#272c30"><rect x="2.600" y="1.300" width="1.300" height="2.500"/><rect x="5.950" y="1.300" width="1.300" height="2.500"/><rect x="9.300" y="1.300" width="1.300" height="2.500"/></g></svg>
<span style="left:425.50px;top:202.95px;font:700 9.3px/1 'Liberation Sans',sans-serif;color:#ffffff;transform:scaleX(1.0148);">Memory usage: 5.0 %</span>
<div style="left:320px;top:224.8px;width:230px;height:27.0px;background:#1f2326;"></div>
<span style="left:325.20px;top:233.50px;font:400 11.2px/1 'Liberation Sans',sans-serif;color:#7f8a93;transform:scaleX(0.8821);">MAIN</span>
<div style="left:320px;top:251.8px;width:230px;height:44.0px;background:#22272a;"></div>
<div style="left:320px;top:251.8px;width:3px;height:44.0px;background:#3c8dbc;"></div>
<span style="left:367.60px;top:267.90px;font:700 13px/1 'Liberation Sans',sans-serif;color:#ffffff;transform:scaleX(0.9329);">Dashboard</span>
<span style="left:367.60px;top:311.90px;font:400 13px/1 'Liberation Sans',sans-serif;color:#bec5cb;transform:scaleX(0.9823);">Query Log</span>
<div style="left:320px;top:339.8px;width:230px;height:27.0px;background:#1f2326;"></div>
<span style="left:325.20px;top:348.50px;font:400 11.2px/1 'Liberation Sans',sans-serif;color:#7f8a93;transform:scaleX(0.8853);">GROUP MANAGEMENT</span>
<span style="left:367.60px;top:382.90px;font:400 13px/1 'Liberation Sans',sans-serif;color:#bec5cb;transform:scaleX(0.9738);">Groups</span>
<span style="left:367.60px;top:426.90px;font:400 13px/1 'Liberation Sans',sans-serif;color:#bec5cb;transform:scaleX(0.9842);">Clients</span>
<span style="left:366.58px;top:470.90px;font:400 13px/1 'Liberation Sans',sans-serif;color:#bec5cb;transform:scaleX(1.0158);">Domains</span>
<span style="left:366.61px;top:514.90px;font:400 13px/1 'Liberation Sans',sans-serif;color:#bec5cb;transform:scaleX(0.9912);">Lists</span>
<div style="left:320px;top:542.8px;width:230px;height:27.0px;background:#1f2326;"></div>
<span style="left:325.20px;top:551.50px;font:400 11.2px/1 'Liberation Sans',sans-serif;color:#7f8a93;transform:scaleX(0.8916);">DNS CONTROL</span>
<span style="left:366.58px;top:585.90px;font:400 13px/1 'Liberation Sans',sans-serif;color:#bec5cb;transform:scaleX(1.0203);">Disable Blocking</span>
<div style="left:320px;top:613.8px;width:230px;height:27.0px;background:#1f2326;"></div>
<span style="left:325.20px;top:622.50px;font:400 11.2px/1 'Liberation Sans',sans-serif;color:#7f8a93;transform:scaleX(0.8362);">SYSTEM</span>
<span style="left:367.60px;top:656.90px;font:400 13px/1 'Liberation Sans',sans-serif;color:#bec5cb;transform:scaleX(0.9900);">Settings</span>
<span style="left:367.60px;top:700.90px;font:400 13px/1 'Liberation Sans',sans-serif;color:#bec5cb;transform:scaleX(1.0049);">Tools</span>
<div style="left:320px;top:728.8px;width:230px;height:27.0px;background:#1f2326;"></div>
<span style="left:325.20px;top:737.50px;font:400 11.2px/1 'Liberation Sans',sans-serif;color:#7f8a93;transform:scaleX(0.8913);">DONATE</span>
<span style="left:366.57px;top:772.90px;font:400 13px/1 'Liberation Sans',sans-serif;color:#bec5cb;transform:scaleX(1.0273);">Donate</span>
<svg style="left:339.4px;top:266.3px;" width="17" height="14.2" viewBox="-0.01 32.05 576.04 447.95" preserveAspectRatio="none" fill="#ffffff"><path d="M280.370 148.260L96 300.110V464a16 16 0 0 0 16 16l112.060-.29a16 16 0 0 0 15.920-16V368a16 16 0 0 1 16-16h64a16 16 0 0 1 16 16v95.640a16 16 0 0 0 16 16.050L464 480a16 16 0 0 0 16-16V300L295.670 148.260a12.190 12.190 0 0 0-15.300 0zM571.600 251.470L488 182.560V44.050a12 12 0 0 0-12-12h-56a12 12 0 0 0-12 12v72.610L318.470 43a48 48 0 0 0-61 0L4.340 251.470a12 12 0 0 0-1.600 16.900l25.500 31A12 12 0 0 0 45.150 301l235.220-193.740a12.190 12.190 0 0 1 15.300 0L530.900 301a12 12 0 0 0 16.900-1.600l25.500-31a12 12 0 0 0-1.700-16.930z"/></svg>
<svg style="left:342px;top:310.40000000000003px;" width="11.6" height="14.4" viewBox="0.00 0.00 384.00 512.00" preserveAspectRatio="none" fill="#bec5cb"><path d="M224 136V0H24C10.700 0 0 10.700 0 24v464c0 13.300 10.700 24 24 24h336c13.300 0 24-10.700 24-24V160H248c-13.200 0-24-10.800-24-24zm64 236c0 6.600-5.400 12-12 12H108c-6.600 0-12-5.400-12-12v-8c0-6.600 5.400-12 12-12h168c6.600 0 12 5.400 12 12v8zm0-64c0 6.600-5.400 12-12 12H108c-6.600 0-12-5.400-12-12v-8c0-6.600 5.400-12 12-12h168c6.600 0 12 5.400 12 12v8zm0-72v8c0 6.600-5.400 12-12 12H108c-6.600 0-12-5.400-12-12v-8c0-6.600 5.400-12 12-12h168c6.600 0 12 5.400 12 12zm96-114.100v6.100H256V0h6.100c6.400 0 12.500 2.500 17 7l97.900 98c4.500 4.500 7 10.600 7 16.900z"/></svg>
<svg style="left:338.4px;top:381.8px;" width="18.4" height="13.6" viewBox="0.00 32.00 640.00 448.00" preserveAspectRatio="none" fill="#bec5cb"><path d="M192 256c61.900 0 112-50.100 112-112S253.900 32 192 32 80 82.100 80 144s50.100 112 112 112zm76.800 32h-8.300c-20.800 10-43.900 16-68.500 16s-47.600-6-68.500-16h-8.300C51.600 288 0 339.600 0 403.200V432c0 26.500 21.500 48 48 48h288c26.500 0 48-21.500 48-48v-28.800c0-63.600-51.600-115.200-115.200-115.200zM480 256c53 0 96-43 96-96s-43-96-96-96-96 43-96 96 43 96 96 96zm48 32h-3.800c-13.900 4.800-28.600 8-44.200 8s-30.300-3.200-44.200-8H432c-20.400 0-39.200 5.900-55.700 15.400 24.400 26.300 39.700 61.200 39.700 99.800v38.400c0 2.200-.5 4.300-.6 6.400H592c26.500 0 48-21.500 48-48 0-61.900-50.100-112-112-112z"/></svg>
<svg style="left:338.4px;top:426.0px;" width="18.4" height="12.6" viewBox="0.00 0.00 640.00 512.00" preserveAspectRatio="none" fill="#bec5cb"><path d="M624 416H381.540c-.74 19.810-14.710 32-32.740 32H288c-18.690 0-33.020-17.470-32.770-32H16c-8.800 0-16 7.200-16 16v16c0 35.200 28.800 64 64 64h512c35.200 0 64-28.800 64-64v-16c0-8.800-7.200-16-16-16zM576 48c0-26.400-21.600-48-48-48H112C85.600 0 64 21.600 64 48v336h512V48zm-64 272H128V64h384v256z"/></svg>
<svg style="left:340.6px;top:470.40000000000003px;" width="14.4" height="12" viewBox="0.00 48.00 512.00 416.00" preserveAspectRatio="none" fill="#bec5cb"><path d="M80 368H16a16 16 0 0 0-16 16v64a16 16 0 0 0 16 16h64a16 16 0 0 0 16-16v-64a16 16 0 0 0-16-16zm0-320H16A16 16 0 0 0 0 64v64a16 16 0 0 0 16 16h64a16 16 0 0 0 16-16V64a16 16 0 0 0-16-16zm0 160H16a16 16 0 0 0-16 16v64a16 16 0 0 0 16 16h64a16 16 0 0 0 16-16v-64a16 16 0 0 0-16-16zm416 176H176a16 16 0 0 0-16 16v32a16 16 0 0 0 16 16h320a16 16 0 0 0 16-16v-32a16 16 0 0 0-16-16zm0-320H176a16 16 0 0 0-16 16v32a16 16 0 0 0 16 16h320a16 16 0 0 0 16-16V80a16 16 0 0 0-16-16zm0 160H176a16 16 0 0 0-16 16v32a16 16 0 0 0 16 16h320a16 16 0 0 0 16-16v-32a16 16 0 0 0-16-16z"/></svg>
<svg style="left:340.8px;top:514.0px;" width="13.6" height="14" viewBox="16.00 0.02 480.00 511.95" preserveAspectRatio="none" fill="#bec5cb"><path d="M466.500 83.700l-192-80a48.150 48.150 0 0 0-36.900 0l-192 80C27.700 91.100 16 108.600 16 128c0 198.500 114.500 335.700 221.500 380.300 11.800 4.900 25.100 4.900 36.900 0C360.100 472.600 496 349.300 496 128c0-19.400-11.700-36.900-29.500-44.300zM256.100 446.300l-.1-381 175.900 73.300c-3.300 151.400-82.100 261.100-175.800 307.700z"/></svg>
<div style="left:342.2px;top:585.5999999999999px;width:11.2px;height:10.8px;background:#bec5cb;border-radius:2px;"></div>
<svg style="left:0;top:0" width="1896" height="996"><path fill="#bec5cb" fill-rule="evenodd" d="M347.70 660.57 L349.00 660.91 L348.68 662.45 L347.35 662.26 L346.71 663.22 L347.38 664.38 L346.08 665.25 L345.27 664.18 L344.13 664.40 L343.79 665.70 L342.25 665.38 L342.44 664.05 L341.48 663.41 L340.32 664.08 L339.45 662.78 L340.52 661.97 L340.30 660.83 L339.00 660.49 L339.32 658.95 L340.65 659.14 L341.29 658.18 L340.62 657.02 L341.92 656.15 L342.73 657.22 L343.87 657.00 L344.21 655.70 L345.75 656.02 L345.56 657.35 L346.52 657.99 L347.68 657.32 L348.55 658.62 L347.48 659.43ZM342.40 660.70a1.6 1.6 0 1 0 3.2 0a1.6 1.6 0 1 0 -3.2 0ZM355.36 666.82 L356.42 667.64 L355.53 668.93 L354.38 668.24 L353.41 668.88 L353.58 670.21 L352.04 670.50 L351.71 669.20 L350.58 668.96 L349.76 670.02 L348.47 669.13 L349.16 667.98 L348.52 667.01 L347.19 667.18 L346.90 665.64 L348.20 665.31 L348.44 664.18 L347.38 663.36 L348.27 662.07 L349.42 662.76 L350.39 662.12 L350.22 660.79 L351.76 660.50 L352.09 661.80 L353.22 662.04 L354.04 660.98 L355.33 661.87 L354.64 663.02 L355.28 663.99 L356.61 663.82 L356.90 665.36 L355.60 665.69ZM350.30 665.50a1.6 1.6 0 1 0 3.2 0a1.6 1.6 0 1 0 -3.2 0Z"/></svg>
<svg style="left:340px;top:698.0999999999999px;" width="15" height="14.8" viewBox="-0.05 0.00 512.03 512.05" preserveAspectRatio="none" fill="#bec5cb"><path d="M501.100 395.700L384 278.600c-23.100-23.100-57.600-27.600-85.400-13.900L192 158.100V96L64 0 0 64l96 128h62.100l106.600 106.600c-13.600 27.800-9.200 62.300 13.900 85.400l117.100 117.100c14.600 14.600 38.200 14.600 52.700 0l52.700-52.700c14.500-14.600 14.500-38.200 0-52.700zM331.700 225c28.300 0 54.900 11 74.900 31l19.400 19.400c15.800-6.900 30.800-16.500 43.800-29.500 37.100-37.100 49.700-89.300 37.900-136.700-2.200-9-13.500-12.100-20.100-5.500l-74.400 74.400-67.900-11.300L334 98.900l74.400-74.400c6.600-6.600 3.400-17.900-5.700-20.200-47.400-11.700-99.600.9-136.600 37.900-28.500 28.500-41.900 66.100-41.200 103.600l82.100 82.100c8.100-1.900 16.500-2.900 24.700-2.900zm-103.900 82l-56.700-56.700L18.700 402.800c-25 25-25 65.500 0 90.500s65.500 25 90.500 0l123.600-123.600c-7.600-19.900-9.900-41.600-5-62.700zM64 472c-13.200 0-24-10.800-24-24 0-13.300 10.700-24 24-24s24 10.700 24 24c0 13.200-10.700 24-24 24z"/></svg>
<svg style="left:340px;top:771.5px;" width="15.2" height="14.4" viewBox="0.00 0.00 512.00 512.00" preserveAspectRatio="none" fill="#bec5cb"><path d="M256 416c114.900 0 208-93.100 208-208S370.900 0 256 0 48 93.100 48 208s93.100 208 208 208zM480 352h-32.500c-19.600 26-44.600 47.700-73 64h63.800c5.300 0 9.600 3.600 9.600 8v16c0 4.400-4.300 8-9.600 8H73.600c-5.300 0-9.600-3.600-9.600-8v-16c0-4.400 4.300-8 9.600-8h63.800c-28.400-16.300-53.300-38-73-64H32c-17.700 0-32 14.300-32 32v96c0 17.700 14.300 32 32 32h448c17.700 0 32-14.300 32-32v-96c0-17.700-14.300-32-32-32z"/></svg>
<span style="left:345.50px;top:773.80px;font:700 8.6px/1 'Liberation Sans',sans-serif;color:#272c30;transform:scaleX(0.8600);">$</span>
<svg style="left:519px;top:583.80px" width="12" height="16" viewBox="0 0 12 16"><path d="M8.300 3.400L3.500 8.200L8.300 13" fill="none" stroke="#bec5cb" stroke-width="1.900" stroke-linecap="round" stroke-linejoin="round"/></svg>
<svg style="left:519px;top:654.80px" width="12" height="16" viewBox="0 0 12 16"><path d="M8.300 3.400L3.500 8.200L8.300 13" fill="none" stroke="#bec5cb" stroke-width="1.900" stroke-linecap="round" stroke-linejoin="round"/></svg>
<svg style="left:519px;top:698.80px" width="12" height="16" viewBox="0 0 12 16"><path d="M8.300 3.400L3.500 8.200L8.300 13" fill="none" stroke="#bec5cb" stroke-width="1.900" stroke-linecap="round" stroke-linejoin="round"/></svg>
<div style="left:521px;top:378px;width:19px;height:16px;background:#3c8dbc;border-radius:3.5px;"></div>
<span style="left:528.70px;top:379.40px;font:700 9.8px/1 'Liberation Sans',sans-serif;color:#ffffff;transform:scaleX(0.7333);">1</span>
<div style="left:521px;top:422px;width:19px;height:16px;background:#3c8dbc;border-radius:3.5px;"></div>
<span style="left:528.20px;top:423.40px;font:700 9.8px/1 'Liberation Sans',sans-serif;color:#ffffff;transform:scaleX(0.9000);">0</span>
<div style="left:497.8px;top:466px;width:18.4px;height:16px;background:#005c32;border-radius:3.5px;"></div>
<span style="left:504.70px;top:467.40px;font:700 9.8px/1 'Liberation Sans',sans-serif;color:#ffffff;transform:scaleX(0.9000);">0</span>
<div style="left:521px;top:466px;width:19px;height:16px;background:#913225;border-radius:3.5px;"></div>
<span style="left:528.20px;top:467.40px;font:700 9.8px/1 'Liberation Sans',sans-serif;color:#ffffff;transform:scaleX(0.9000);">0</span>
<div style="left:467px;top:510px;width:49px;height:16px;background:#b1720c;border-radius:3.5px;"></div>
<span style="left:473.60px;top:511.40px;font:700 9.8px/1 'Liberation Sans',sans-serif;color:#ffffff;transform:scaleX(1.0177);">221,484</span>
<div style="left:521px;top:510px;width:19px;height:16px;background:#0073b7;border-radius:3.5px;"></div>
<span style="left:528.70px;top:511.40px;font:700 9.8px/1 'Liberation Sans',sans-serif;color:#ffffff;transform:scaleX(0.7333);">1</span>
<div style="left:565px;top:133px;width:225px;height:114px;background:#007997;border-radius:7px;overflow:hidden;"></div>
<div style="left:565px;top:221px;width:225px;height:26px;background:rgba(0,0,0,.1);border-radius:0 0 7px 7px;"></div>
<span style="left:574.90px;top:147.10px;font:400 14px/1 'Liberation Sans',sans-serif;color:#ffffff;transform:scaleX(0.9929);">Total Queries</span>
<span style="left:575.40px;top:174.60px;font:700 33px/1 'Liberation Sans',sans-serif;color:#ffffff;transform:scaleX(1.0453);">43</span>
<span style="left:670.80px;top:227.80px;font:400 13px/1 'Liberation Sans',sans-serif;color:rgba(255,255,255,.85);transform:scaleX(1.0051);">2 active clients</span>
<svg style="left:764px;top:226.800px" width="14.200" height="14.200" viewBox="0 0 14 14"><path fill="rgba(255,255,255,.8)" fill-rule="evenodd" d="M7 0A7 7 0 1 0 7 14A7 7 0 1 0 7 0ZM3.600 6.400H8.800L6.800 4.400L7.650 3.550L11.100 7L7.650 10.450L6.800 9.600L8.800 7.600H3.600Z"/></svg>
<div style="left:820px;top:133px;width:225px;height:114px;background:#913225;border-radius:7px;overflow:hidden;"></div>
<div style="left:820px;top:221px;width:225px;height:26px;background:rgba(0,0,0,.1);border-radius:0 0 7px 7px;"></div>
<span style="left:829.40px;top:147.10px;font:400 14px/1 'Liberation Sans',sans-serif;color:#ffffff;transform:scaleX(0.9968);">Queries Blocked</span>
<span style="left:829.52px;top:174.60px;font:700 33px/1 'Liberation Sans',sans-serif;color:#ffffff;transform:scaleX(1.0375);">1</span>
<span style="left:894.79px;top:227.80px;font:400 13px/1 'Liberation Sans',sans-serif;color:rgba(255,255,255,.85);transform:scaleX(1.0105);">List blocked queries</span>
<svg style="left:1019px;top:226.800px" width="14.200" height="14.200" viewBox="0 0 14 14"><path fill="rgba(255,255,255,.8)" fill-rule="evenodd" d="M7 0A7 7 0 1 0 7 14A7 7 0 1 0 7 0ZM3.600 6.400H8.800L6.800 4.400L7.650 3.550L11.100 7L7.650 10.450L6.800 9.600L8.800 7.600H3.600Z"/></svg>
<div style="left:1075px;top:133px;width:225px;height:114px;background:#b1720c;border-radius:7px;overflow:hidden;"></div>
<div style="left:1075px;top:221px;width:225px;height:26px;background:rgba(0,0,0,.1);border-radius:0 0 7px 7px;"></div>
<span style="left:1083.91px;top:147.10px;font:400 14px/1 'Liberation Sans',sans-serif;color:#ffffff;transform:scaleX(0.9885);">Percentage Blocked</span>
<span style="left:1083.88px;top:174.60px;font:700 33px/1 'Liberation Sans',sans-serif;color:#ffffff;transform:scaleX(1.1208);">2.3%</span>
<span style="left:1182.60px;top:227.80px;font:400 13px/1 'Liberation Sans',sans-serif;color:rgba(255,255,255,.85);transform:scaleX(1.0025);">List all queries</span>
<svg style="left:1274px;top:226.800px" width="14.200" height="14.200" viewBox="0 0 14 14"><path fill="rgba(255,255,255,.8)" fill-rule="evenodd" d="M7 0A7 7 0 1 0 7 14A7 7 0 1 0 7 0ZM3.600 6.400H8.800L6.800 4.400L7.650 3.550L11.100 7L7.650 10.450L6.800 9.600L8.800 7.600H3.600Z"/></svg>
<div style="left:1330px;top:133px;width:225px;height:114px;background:#005c32;border-radius:7px;overflow:hidden;"></div>
<div style="left:1330px;top:221px;width:225px;height:26px;background:rgba(0,0,0,.1);border-radius:0 0 7px 7px;"></div>
<span style="left:1338.90px;top:147.10px;font:400 14px/1 'Liberation Sans',sans-serif;color:#ffffff;transform:scaleX(0.9974);">Domains on Lists</span>
<span style="left:1339.10px;top:174.60px;font:700 33px/1 'Liberation Sans',sans-serif;color:#ffffff;transform:scaleX(1.0998);">221,484</span>
<span style="left:1449.83px;top:227.80px;font:400 13px/1 'Liberation Sans',sans-serif;color:rgba(255,255,255,.85);transform:scaleX(0.9741);">Manage lists</span>
<svg style="left:1529px;top:226.800px" width="14.200" height="14.200" viewBox="0 0 14 14"><path fill="rgba(255,255,255,.8)" fill-rule="evenodd" d="M7 0A7 7 0 1 0 7 14A7 7 0 1 0 7 0ZM3.600 6.400H8.800L6.800 4.400L7.650 3.550L11.100 7L7.650 10.450L6.800 9.600L8.800 7.600H3.600Z"/></svg>
<svg style="left:703.800px;top:137.600px" width="75.800" height="76" viewBox="0 0 512 512"><path fill="rgba(0,0,0,.15)" fill-rule="evenodd" d="M57.700 193l9.400 16.400c8.300 14.500 21.900 25.200 38 29.800L163 255.700c17.200 4.900 29 20.600 29 38.500v39.900c0 11 6.200 21 16 25.900s16 14.900 16 25.900v39c0 15.600 14.900 26.900 29.900 22.600c16.100-4.600 28.600-17.500 32.700-33.800l2.800-11.200c4.200-16.900 15.200-31.400 30.300-40l8.100-4.600c15-8.500 24.200-24.500 24.200-41.700v-8.300c0-12.700-5.100-24.900-14.100-33.900l-3.900-3.900c-9-9-21.200-14.100-33.900-14.100H257c-11.100 0-22.100-2.900-31.800-8.400l-34.500-19.700c-4.300-2.500-7.600-6.500-9.200-11.200c-3.200-9.600 1.100-20 10.200-24.500l5.900-3c6.600-3.300 14.300-3.900 21.300-1.500l23.200 7.700c8.200 2.700 17.200-.4 21.900-7.500c4.700-7 4.200-16.300-1.200-22.800l-13.600-16.300c-10-12-9.900-29.500 .3-41.300l15.700-18.300c8.800-10.300 10.200-25 3.500-36.700l-2.400-4.200c-3.500-.2-6.900-.3-10.400-.3C163.100 48 84.400 108.900 57.700 193zM464 256c0-36.800-9.600-71.400-26.400-101.500L412 164.800c-15.700 6.300-23.800 23.800-18.500 39.800l16.900 50.700c3.500 10.400 12 18.300 22.600 20.900l29.100 7.300c1.200-9 1.800-18.200 1.800-27.500zM0 256a256 256 0 1 1 512 0A256 256 0 1 1 0 256z"/></svg>
<svg style="left:950px;top:132px" width="90" height="88" viewBox="0 0 90 88"><path fill="rgba(0,0,0,.15)" d="M27.800 55.700V14.800A4.550 4.550 0 0 1 36.900 14.800V40.800A2.550 2.550 0 0 0 42 40.800V10.300A4.550 4.550 0 0 1 51.100 10.300V40.800A2.500 2.500 0 0 0 56.100 40.800V14.800A4.550 4.550 0 0 1 65.200 14.800V40.800A2.500 2.500 0 0 0 70.200 40.800V24.500A4.650 4.650 0 0 1 79.500 24.500V57.400C79.500 71 69 80.800 53 80.800C43 80.800 36 78.500 29.200 72.400L10.200 55.700A5.600 5.600 0 0 1 18.100 47.300Z"/></svg>
<svg style="left:1208.7px;top:137.6px;" width="80.5" height="75.8" viewBox="-0.00 0.00 544.00 511.99" preserveAspectRatio="none" fill="rgba(0,0,0,.15)"><path d="M527.790 288H290.500l158.030 158.030c6.040 6.040 15.980 6.530 22.190.680 38.700-36.460 65.320-85.610 73.130-140.860 1.340-9.460-6.510-17.850-16.060-17.850zm-15.830-64.800C503.720 103.740 408.260 8.280 288.800.040 279.680-.590 272 7.100 272 16.240V240h223.770c9.140 0 16.820-7.680 16.190-16.800zM224 288V50.710c0-9.550-8.390-17.400-17.840-16.060C86.990 51.490-4.100 155.600.140 280.370 4.500 408.510 114.830 513.590 243.030 511.980c50.400-.630 96.970-16.870 135.260-44.030 7.900-5.600 8.420-17.230 1.570-24.080L224 288z"/></svg>
<svg style="left:1459px;top:141.800px" width="86" height="66.600" viewBox="0 0 86 66.600"><path fill="rgba(0,0,0,.15)" fill-rule="evenodd" d="M8 0H78A8 8 0 0 1 86 8V58.600A8 8 0 0 1 78 66.600H8A8 8 0 0 1 0 58.600V8A8 8 0 0 1 8 0Z M19.300 14.400a5 5 0 1 0 .01 0Z M19.300 28.600a5 5 0 1 0 .01 0Z M19.300 42.700a5 5 0 1 0 .01 0Z M32 16H68.400A1.800 1.800 0 0 1 70.200 17.800V21A1.800 1.800 0 0 1 68.400 22.800H32A1.800 1.800 0 0 1 30.200 21V17.800A1.800 1.800 0 0 1 32 16Z M32 30.200H68.400A1.800 1.800 0 0 1 70.200 32V35.200A1.800 1.800 0 0 1 68.400 37H32A1.800 1.800 0 0 1 30.200 35.200V32A1.800 1.800 0 0 1 32 30.200Z M32 44.300H68.400A1.800 1.800 0 0 1 70.200 46.100V49.300A1.800 1.800 0 0 1 68.400 51.100H32A1.800 1.800 0 0 1 30.200 49.300V46.100A1.800 1.800 0 0 1 32 44.300Z"/></svg>
<div style="left:565px;top:267px;width:988px;height:240.6px;background:#272c30;border:1px solid #727476;border-radius:6px;"></div>
<div style="left:566px;top:308px;width:988px;height:1px;background:#3d4247;"></div>
<span style="left:575.60px;top:280.20px;font:400 16.6px/1 'Liberation Sans',sans-serif;color:#c0c8cf;transform:scaleX(1.0300);">Total queries</span>
<svg style="left:1529.1px;top:280.5px;" width="14.8" height="14.7" viewBox="8.00 8.00 496.00 496.00" preserveAspectRatio="none" fill="#c6cdd4"><path d="M256 8C119.043 8 8 119.083 8 256c0 136.997 111.043 248 248 248s248-111.003 248-248C504 119.083 392.957 8 256 8z"/></svg>
<span style="left:1534.70px;top:282.60px;font:700 9.6px/1 'Liberation Sans',sans-serif;color:#272c30;transform:scaleX(1.8000);font-family:'Liberation Serif',serif;">i</span>
<div style="left:565px;top:530.4px;width:988px;height:240.4px;background:#272c30;border:1px solid #727476;border-radius:6px;"></div>
<div style="left:566px;top:571.4px;width:988px;height:1px;background:#3d4247;"></div>
<span style="left:575.60px;top:542.60px;font:400 16.6px/1 'Liberation Sans',sans-serif;color:#c0c8cf;transform:scaleX(1.0401);">Client activity</span>
<svg style="left:1529.1px;top:543.9px;" width="14.8" height="14.7" viewBox="8.00 8.00 496.00 496.00" preserveAspectRatio="none" fill="#c6cdd4"><path d="M256 8C119.043 8 8 119.083 8 256c0 136.997 111.043 248 248 248s248-111.003 248-248C504 119.083 392.957 8 256 8z"/></svg>
<span style="left:1534.70px;top:546.00px;font:700 9.6px/1 'Liberation Sans',sans-serif;color:#272c30;transform:scaleX(1.8000);font-family:'Liberation Serif',serif;">i</span>
<div style="left:565px;top:793px;width:478px;height:258px;background:#272c30;border:1px solid #727476;border-radius:6px;"></div>
<div style="left:566px;top:834px;width:478px;height:1px;background:#3d4247;"></div>
<span style="left:575.60px;top:806.20px;font:400 16.6px/1 'Liberation Sans',sans-serif;color:#c0c8cf;">Query Types</span>
<div style="left:1075px;top:793px;width:478px;height:258px;background:#272c30;border:1px solid #727476;border-radius:6px;"></div>
<div style="left:1076px;top:834px;width:478px;height:1px;background:#3d4247;"></div>
<span style="left:1084.59px;top:806.20px;font:400 16.6px/1 'Liberation Sans',sans-serif;color:#c0c8cf;transform:scaleX(1.0105);">Upstream servers</span>
<svg style="left:0;top:0" width="1896" height="996" shape-rendering="crispEdges"><g fill="rgba(255,255,255,.2)"><rect x="613" y="329" width="1" height="150"/><rect x="652" y="329" width="1" height="150"/><rect x="691" y="329" width="1" height="150"/><rect x="730" y="329" width="1" height="150"/><rect x="769" y="329" width="1" height="150"/><rect x="809" y="329" width="1" height="150"/><rect x="848" y="329" width="1" height="150"/><rect x="887" y="329" width="1" height="150"/><rect x="926" y="329" width="1" height="150"/><rect x="965" y="329" width="1" height="150"/><rect x="1005" y="329" width="1" height="150"/><rect x="1044" y="329" width="1" height="150"/><rect x="1083" y="329" width="1" height="150"/><rect x="1122" y="329" width="1" height="150"/><rect x="1161" y="329" width="1" height="150"/><rect x="1200" y="329" width="1" height="150"/><rect x="1240" y="329" width="1" height="150"/><rect x="1279" y="329" width="1" height="150"/><rect x="1318" y="329" width="1" height="150"/><rect x="1357" y="329" width="1" height="150"/><rect x="1396" y="329" width="1" height="150"/><rect x="1435" y="329" width="1" height="150"/><rect x="1475" y="329" width="1" height="150"/><rect x="1514" y="329" width="1" height="150"/><rect x="595" y="470" width="949" height="1"/><rect x="595" y="439" width="949" height="1"/><rect x="595" y="407" width="949" height="1"/><rect x="595" y="376" width="949" height="1"/><rect x="595" y="344" width="949" height="1"/></g></svg>
<span style="left:585.80px;top:464.10px;font:700 12px/1 'Liberation Sans',sans-serif;color:#b3bac0;">0</span>
<span style="left:585.80px;top:432.60px;font:700 12px/1 'Liberation Sans',sans-serif;color:#b3bac0;">4</span>
<span style="left:585.80px;top:401.10px;font:700 12px/1 'Liberation Sans',sans-serif;color:#b3bac0;">8</span>
<span style="left:579.60px;top:369.60px;font:700 12px/1 'Liberation Sans',sans-serif;color:#b3bac0;">12</span>
<span style="left:579.60px;top:338.10px;font:700 12px/1 'Liberation Sans',sans-serif;color:#b3bac0;">16</span>
<span style="left:598.70px;top:482.00px;font:700 12px/1 'Liberation Sans',sans-serif;color:#b3bac0;transform:scaleX(0.9446);">00:00</span>
<span style="left:637.70px;top:482.00px;font:700 12px/1 'Liberation Sans',sans-serif;color:#b3bac0;transform:scaleX(0.9446);">01:00</span>
<span style="left:676.70px;top:482.00px;font:700 12px/1 'Liberation Sans',sans-serif;color:#b3bac0;transform:scaleX(0.9446);">02:00</span>
<span style="left:715.70px;top:482.00px;font:700 12px/1 'Liberation Sans',sans-serif;color:#b3bac0;transform:scaleX(0.9446);">03:00</span>
<span style="left:754.70px;top:482.00px;font:700 12px/1 'Liberation Sans',sans-serif;color:#b3bac0;transform:scaleX(0.9446);">04:00</span>
<span style="left:794.70px;top:482.00px;font:700 12px/1 'Liberation Sans',sans-serif;color:#b3bac0;transform:scaleX(0.9446);">05:00</span>
<span style="left:833.70px;top:482.00px;font:700 12px/1 'Liberation Sans',sans-serif;color:#b3bac0;transform:scaleX(0.9446);">06:00</span>
<span style="left:872.70px;top:482.00px;font:700 12px/1 'Liberation Sans',sans-serif;color:#b3bac0;transform:scaleX(0.9446);">07:00</span>
<span style="left:911.70px;top:482.00px;font:700 12px/1 'Liberation Sans',sans-serif;color:#b3bac0;transform:scaleX(0.9446);">08:00</span>
<span style="left:950.70px;top:482.00px;font:700 12px/1 'Liberation Sans',sans-serif;color:#b3bac0;transform:scaleX(0.9446);">09:00</span>
<span style="left:990.70px;top:482.00px;font:700 12px/1 'Liberation Sans',sans-serif;color:#b3bac0;transform:scaleX(0.9446);">10:00</span>
<span style="left:1029.70px;top:482.00px;font:700 12px/1 'Liberation Sans',sans-serif;color:#b3bac0;transform:scaleX(0.9652);">11:00</span>
<span style="left:1068.70px;top:482.00px;font:700 12px/1 'Liberation Sans',sans-serif;color:#b3bac0;transform:scaleX(0.9446);">12:00</span>
<span style="left:1107.70px;top:482.00px;font:700 12px/1 'Liberation Sans',sans-serif;color:#b3bac0;transform:scaleX(0.9446);">13:00</span>
<span style="left:1146.70px;top:482.00px;font:700 12px/1 'Liberation Sans',sans-serif;color:#b3bac0;transform:scaleX(0.9446);">14:00</span>
<span style="left:1185.70px;top:482.00px;font:700 12px/1 'Liberation Sans',sans-serif;color:#b3bac0;transform:scaleX(0.9446);">15:00</span>
<span style="left:1225.70px;top:482.00px;font:700 12px/1 'Liberation Sans',sans-serif;color:#b3bac0;transform:scaleX(0.9446);">16:00</span>
<span style="left:1264.70px;top:482.00px;font:700 12px/1 'Liberation Sans',sans-serif;color:#b3bac0;transform:scaleX(0.9446);">17:00</span>
<span style="left:1303.70px;top:482.00px;font:700 12px/1 'Liberation Sans',sans-serif;color:#b3bac0;transform:scaleX(0.9446);">18:00</span>
<span style="left:1342.70px;top:482.00px;font:700 12px/1 'Liberation Sans',sans-serif;color:#b3bac0;transform:scaleX(0.9446);">19:00</span>
<span style="left:1381.70px;top:482.00px;font:700 12px/1 'Liberation Sans',sans-serif;color:#b3bac0;transform:scaleX(0.9446);">20:00</span>
<span style="left:1420.70px;top:482.00px;font:700 12px/1 'Liberation Sans',sans-serif;color:#b3bac0;transform:scaleX(0.9446);">21:00</span>
<span style="left:1460.70px;top:482.00px;font:700 12px/1 'Liberation Sans',sans-serif;color:#b3bac0;transform:scaleX(0.9446);">22:00</span>
<span style="left:1499.70px;top:482.00px;font:700 12px/1 'Liberation Sans',sans-serif;color:#b3bac0;transform:scaleX(0.9446);">23:00</span>
<svg style="left:0;top:0" width="1896" height="996"><rect x="1476" y="446.95" width="5" height="23.55" fill="#4b6ea8"/><rect x="1476" y="329.20" width="5" height="117.75" fill="#10b25c"/><rect x="1483" y="415.55" width="4.9" height="54.95" fill="#4b6ea8"/><rect x="1483" y="368.45" width="4.9" height="47.10" fill="#10b25c"/><rect x="1489.2" y="462.65" width="4.8" height="7.85" fill="#8c2c20"/><rect x="1489.2" y="423.40" width="4.8" height="39.25" fill="#4b6ea8"/><rect x="1489.2" y="407.70" width="4.8" height="15.70" fill="#10b25c"/><rect x="1541.5" y="454.80" width="2.5" height="15.70" fill="#4b6ea8"/><rect x="1541.5" y="439.10" width="2.5" height="15.70" fill="#10b25c"/></svg>
<svg style="left:0;top:0" width="1896" height="996" shape-rendering="crispEdges"><g fill="rgba(255,255,255,.2)"><rect x="613" y="592" width="1" height="150"/><rect x="652" y="592" width="1" height="150"/><rect x="691" y="592" width="1" height="150"/><rect x="730" y="592" width="1" height="150"/><rect x="769" y="592" width="1" height="150"/><rect x="809" y="592" width="1" height="150"/><rect x="848" y="592" width="1" height="150"/><rect x="887" y="592" width="1" height="150"/><rect x="926" y="592" width="1" height="150"/><rect x="965" y="592" width="1" height="150"/><rect x="1005" y="592" width="1" height="150"/><rect x="1044" y="592" width="1" height="150"/><rect x="1083" y="592" width="1" height="150"/><rect x="1122" y="592" width="1" height="150"/><rect x="1161" y="592" width="1" height="150"/><rect x="1200" y="592" width="1" height="150"/><rect x="1240" y="592" width="1" height="150"/><rect x="1279" y="592" width="1" height="150"/><rect x="1318" y="592" width="1" height="150"/><rect x="1357" y="592" width="1" height="150"/><rect x="1396" y="592" width="1" height="150"/><rect x="1435" y="592" width="1" height="150"/><rect x="1475" y="592" width="1" height="150"/><rect x="1514" y="592" width="1" height="150"/><rect x="595" y="733" width="949" height="1"/><rect x="595" y="713" width="949" height="1"/><rect x="595" y="693" width="949" height="1"/><rect x="595" y="673" width="949" height="1"/><rect x="595" y="652" width="949" height="1"/><rect x="595" y="632" width="949" height="1"/><rect x="595" y="612" width="949" height="1"/><rect x="595" y="592" width="949" height="1"/></g></svg>
<span style="left:585.80px;top:727.10px;font:700 12px/1 'Liberation Sans',sans-serif;color:#b3bac0;">0</span>
<span style="left:585.80px;top:706.96px;font:700 12px/1 'Liberation Sans',sans-serif;color:#b3bac0;">2</span>
<span style="left:585.80px;top:686.81px;font:700 12px/1 'Liberation Sans',sans-serif;color:#b3bac0;">4</span>
<span style="left:585.80px;top:666.67px;font:700 12px/1 'Liberation Sans',sans-serif;color:#b3bac0;">6</span>
<span style="left:585.80px;top:646.53px;font:700 12px/1 'Liberation Sans',sans-serif;color:#b3bac0;">8</span>
<span style="left:579.60px;top:626.39px;font:700 12px/1 'Liberation Sans',sans-serif;color:#b3bac0;">10</span>
<span style="left:579.60px;top:606.24px;font:700 12px/1 'Liberation Sans',sans-serif;color:#b3bac0;">12</span>
<span style="left:579.60px;top:586.10px;font:700 12px/1 'Liberation Sans',sans-serif;color:#b3bac0;">14</span>
<span style="left:598.70px;top:745.00px;font:700 12px/1 'Liberation Sans',sans-serif;color:#b3bac0;transform:scaleX(0.9446);">00:00</span>
<span style="left:637.70px;top:745.00px;font:700 12px/1 'Liberation Sans',sans-serif;color:#b3bac0;transform:scaleX(0.9446);">01:00</span>
<span style="left:676.70px;top:745.00px;font:700 12px/1 'Liberation Sans',sans-serif;color:#b3bac0;transform:scaleX(0.9446);">02:00</span>
<span style="left:715.70px;top:745.00px;font:700 12px/1 'Liberation Sans',sans-serif;color:#b3bac0;transform:scaleX(0.9446);">03:00</span>
<span style="left:754.70px;top:745.00px;font:700 12px/1 'Liberation Sans',sans-serif;color:#b3bac0;transform:scaleX(0.9446);">04:00</span>
<span style="left:794.70px;top:745.00px;font:700 12px/1 'Liberation Sans',sans-serif;color:#b3bac0;transform:scaleX(0.9446);">05:00</span>
<span style="left:833.70px;top:745.00px;font:700 12px/1 'Liberation Sans',sans-serif;color:#b3bac0;transform:scaleX(0.9446);">06:00</span>
<span style="left:872.70px;top:745.00px;font:700 12px/1 'Liberation Sans',sans-serif;color:#b3bac0;transform:scaleX(0.9446);">07:00</span>
<span style="left:911.70px;top:745.00px;font:700 12px/1 'Liberation Sans',sans-serif;color:#b3bac0;transform:scaleX(0.9446);">08:00</span>
<span style="left:950.70px;top:745.00px;font:700 12px/1 'Liberation Sans',sans-serif;color:#b3bac0;transform:scaleX(0.9446);">09:00</span>
<span style="left:990.70px;top:745.00px;font:700 12px/1 'Liberation Sans',sans-serif;color:#b3bac0;transform:scaleX(0.9446);">10:00</span>
<span style="left:1029.70px;top:745.00px;font:700 12px/1 'Liberation Sans',sans-serif;color:#b3bac0;transform:scaleX(0.9652);">11:00</span>
<span style="left:1068.70px;top:745.00px;font:700 12px/1 'Liberation Sans',sans-serif;color:#b3bac0;transform:scaleX(0.9446);">12:00</span>
<span style="left:1107.70px;top:745.00px;font:700 12px/1 'Liberation Sans',sans-serif;color:#b3bac0;transform:scaleX(0.9446);">13:00</span>
<span style="left:1146.70px;top:745.00px;font:700 12px/1 'Liberation Sans',sans-serif;color:#b3bac0;transform:scaleX(0.9446);">14:00</span>
<span style="left:1185.70px;top:745.00px;font:700 12px/1 'Liberation Sans',sans-serif;color:#b3bac0;transform:scaleX(0.9446);">15:00</span>
<span style="left:1225.70px;top:745.00px;font:700 12px/1 'Liberation Sans',sans-serif;color:#b3bac0;transform:scaleX(0.9446);">16:00</span>
<span style="left:1264.70px;top:745.00px;font:700 12px/1 'Liberation Sans',sans-serif;color:#b3bac0;transform:scaleX(0.9446);">17:00</span>
<span style="left:1303.70px;top:745.00px;font:700 12px/1 'Liberation Sans',sans-serif;color:#b3bac0;transform:scaleX(0.9446);">18:00</span>
<span style="left:1342.70px;top:745.00px;font:700 12px/1 'Liberation Sans',sans-serif;color:#b3bac0;transform:scaleX(0.9446);">19:00</span>
<span style="left:1381.70px;top:745.00px;font:700 12px/1 'Liberation Sans',sans-serif;color:#b3bac0;transform:scaleX(0.9446);">20:00</span>
<span style="left:1420.70px;top:745.00px;font:700 12px/1 'Liberation Sans',sans-serif;color:#b3bac0;transform:scaleX(0.9446);">21:00</span>
<span style="left:1460.70px;top:745.00px;font:700 12px/1 'Liberation Sans',sans-serif;color:#b3bac0;transform:scaleX(0.9446);">22:00</span>
<span style="left:1499.70px;top:745.00px;font:700 12px/1 'Liberation Sans',sans-serif;color:#b3bac0;transform:scaleX(0.9446);">23:00</span>
<svg style="left:0;top:0" width="1896" height="996"><rect x="1476" y="592.00" width="5" height="141.50" fill="#f56954"/><rect x="1482.8" y="602.11" width="4.9" height="131.39" fill="#f56954"/><rect x="1489.2" y="693.07" width="4.8" height="40.43" fill="#f56954"/></svg>
<svg style="left:0;top:0" width="1896" height="996"><path d="M688.70 845.90A111.3 111.3 0 0 1 791.13 913.67L739.13 935.77A54.8 54.8 0 0 0 688.70 902.40Z" fill="#f56954" stroke="#272c30" stroke-width="1.600"/><path d="M791.13 913.67A111.3 111.3 0 0 1 728.46 1061.16L708.28 1008.38A54.8 54.8 0 0 0 739.13 935.77Z" fill="#3c8dbc" stroke="#272c30" stroke-width="1.600"/><path d="M728.46 1061.16A111.3 111.3 0 0 1 608.57 1034.45L649.25 995.24A54.8 54.8 0 0 0 708.28 1008.38Z" fill="#0073b7" stroke="#272c30" stroke-width="1.600"/><path d="M608.57 1034.45A111.3 111.3 0 0 1 578.07 945.03L634.23 951.21A54.8 54.8 0 0 0 649.25 995.24Z" fill="#001f3f" stroke="#272c30" stroke-width="1.600"/><path d="M578.07 945.03A111.3 111.3 0 0 1 581.02 929.05L635.68 943.34A54.8 54.8 0 0 0 634.23 951.21Z" fill="#d81b60" stroke="#272c30" stroke-width="1.600"/><path d="M581.02 929.05A111.3 111.3 0 0 1 688.70 845.90L688.70 902.40A54.8 54.8 0 0 0 635.68 943.34Z" fill="#222222" stroke="#272c30" stroke-width="1.600"/></svg>
<svg style="left:0;top:0" width="1896" height="996"><path d="M1198.60 846.10A111.3 111.3 0 0 1 1214.81 847.29L1206.58 903.18A54.8 54.8 0 0 0 1198.60 902.60Z" fill="#f56954" stroke="#272c30" stroke-width="1.600"/><path d="M1214.81 847.29A111.3 111.3 0 1 1 1144.13 1054.46L1171.78 1005.19A54.8 54.8 0 1 0 1206.58 903.18Z" fill="#3c8dbc" stroke="#272c30" stroke-width="1.600"/><path d="M1144.13 1054.46A111.3 111.3 0 0 1 1137.19 864.58L1168.36 911.70A54.8 54.8 0 0 0 1171.78 1005.19Z" fill="#00a65a" stroke="#272c30" stroke-width="1.600"/><path d="M1137.19 864.58A111.3 111.3 0 0 1 1198.60 846.10L1198.60 902.60A54.8 54.8 0 0 0 1168.36 911.70Z" fill="#00c0ef" stroke="#272c30" stroke-width="1.600"/></svg>
<div style="left:892.9px;top:889.8px;width:13.6px;height:13.2px;background:#f56954;border-radius:2.500px;"></div>
<svg style="left:892.9px;top:889.8px" width="13.600" height="13.200" viewBox="0 0 13.600 13.200"><path d="M3.500 6.600L5.700 8.900L10.100 4.300" fill="none" stroke="#272c30" stroke-width="1.250"/></svg>
<span style="left:915.90px;top:889.80px;font:400 13px/1 'Liberation Sans',sans-serif;color:#bec5cb;">A</span>
<div style="left:892.9px;top:912.8px;width:13.6px;height:13.2px;background:#3c8dbc;border-radius:2.500px;"></div>
<svg style="left:892.9px;top:912.8px" width="13.600" height="13.200" viewBox="0 0 13.600 13.200"><path d="M3.500 6.600L5.700 8.900L10.100 4.300" fill="none" stroke="#272c30" stroke-width="1.250"/></svg>
<span style="left:915.90px;top:912.80px;font:400 13px/1 'Liberation Sans',sans-serif;color:#bec5cb;transform:scaleX(0.8654);">AAAA</span>
<div style="left:892.9px;top:935.8px;width:13.6px;height:13.2px;background:#0073b7;border-radius:2.500px;"></div>
<svg style="left:892.9px;top:935.8px" width="13.600" height="13.200" viewBox="0 0 13.600 13.200"><path d="M3.500 6.600L5.700 8.900L10.100 4.300" fill="none" stroke="#272c30" stroke-width="1.250"/></svg>
<span style="left:914.95px;top:935.80px;font:400 13px/1 'Liberation Sans',sans-serif;color:#bec5cb;transform:scaleX(0.9508);">PTR</span>
<div style="left:892.9px;top:958.8px;width:13.6px;height:13.2px;background:#001f3f;border-radius:2.500px;"></div>
<svg style="left:892.9px;top:958.8px" width="13.600" height="13.200" viewBox="0 0 13.600 13.200"><path d="M3.500 6.600L5.700 8.900L10.100 4.300" fill="none" stroke="#272c30" stroke-width="1.250"/></svg>
<span style="left:915.90px;top:958.80px;font:400 13px/1 'Liberation Sans',sans-serif;color:#bec5cb;transform:scaleX(0.8736);">TXT</span>
<div style="left:892.9px;top:981.8px;width:13.6px;height:13.2px;background:#d81b60;border-radius:2.500px;"></div>
<svg style="left:892.9px;top:981.8px" width="13.600" height="13.200" viewBox="0 0 13.600 13.200"><path d="M3.500 6.600L5.700 8.900L10.100 4.300" fill="none" stroke="#272c30" stroke-width="1.250"/></svg>
<span style="left:915.90px;top:981.80px;font:400 13px/1 'Liberation Sans',sans-serif;color:#bec5cb;transform:scaleX(0.8840);">SVCB</span>
<div style="left:1362.6px;top:913px;width:13.6px;height:13.2px;background:#f56954;border-radius:2.500px;"></div>
<svg style="left:1362.6px;top:913px" width="13.600" height="13.200" viewBox="0 0 13.600 13.200"><path d="M3.500 6.600L5.700 8.900L10.100 4.300" fill="none" stroke="#272c30" stroke-width="1.250"/></svg>
<span style="left:1386.30px;top:913.00px;font:400 13px/1 'Liberation Sans',sans-serif;color:#bec5cb;transform:scaleX(1.0531);">blocklist</span>
<div style="left:1362.6px;top:936px;width:13.6px;height:13.2px;background:#3c8dbc;border-radius:2.500px;"></div>
<svg style="left:1362.6px;top:936px" width="13.600" height="13.200" viewBox="0 0 13.600 13.200"><path d="M3.500 6.600L5.700 8.900L10.100 4.300" fill="none" stroke="#272c30" stroke-width="1.250"/></svg>
<span style="left:1386.30px;top:936.00px;font:400 13px/1 'Liberation Sans',sans-serif;color:#bec5cb;transform:scaleX(0.9779);">cache</span>
<div style="left:1362.6px;top:959px;width:13.6px;height:13.2px;background:#00a65a;border-radius:2.500px;"></div>
<svg style="left:1362.6px;top:959px" width="13.600" height="13.200" viewBox="0 0 13.600 13.200"><path d="M3.500 6.600L5.700 8.900L10.100 4.300" fill="none" stroke="#272c30" stroke-width="1.250"/></svg>
<span style="left:1386.30px;top:959.00px;font:400 13px/1 'Liberation Sans',sans-serif;color:#bec5cb;">one.one.one.one#53</span>
<div style="left:1362.6px;top:982px;width:13.6px;height:13.2px;background:#00c0ef;border-radius:2.500px;"></div>
<svg style="left:1362.6px;top:982px" width="13.600" height="13.200" viewBox="0 0 13.600 13.200"><path d="M3.500 6.600L5.700 8.900L10.100 4.300" fill="none" stroke="#272c30" stroke-width="1.250"/></svg>
<span style="left:1386.30px;top:982.00px;font:400 13px/1 'Liberation Sans',sans-serif;color:#bec5cb;">one.one.one.one#53</span>
<div style="left:0px;top:992px;width:1896px;height:4px;background:#3a3a3a;"></div>

</div></body></html>
